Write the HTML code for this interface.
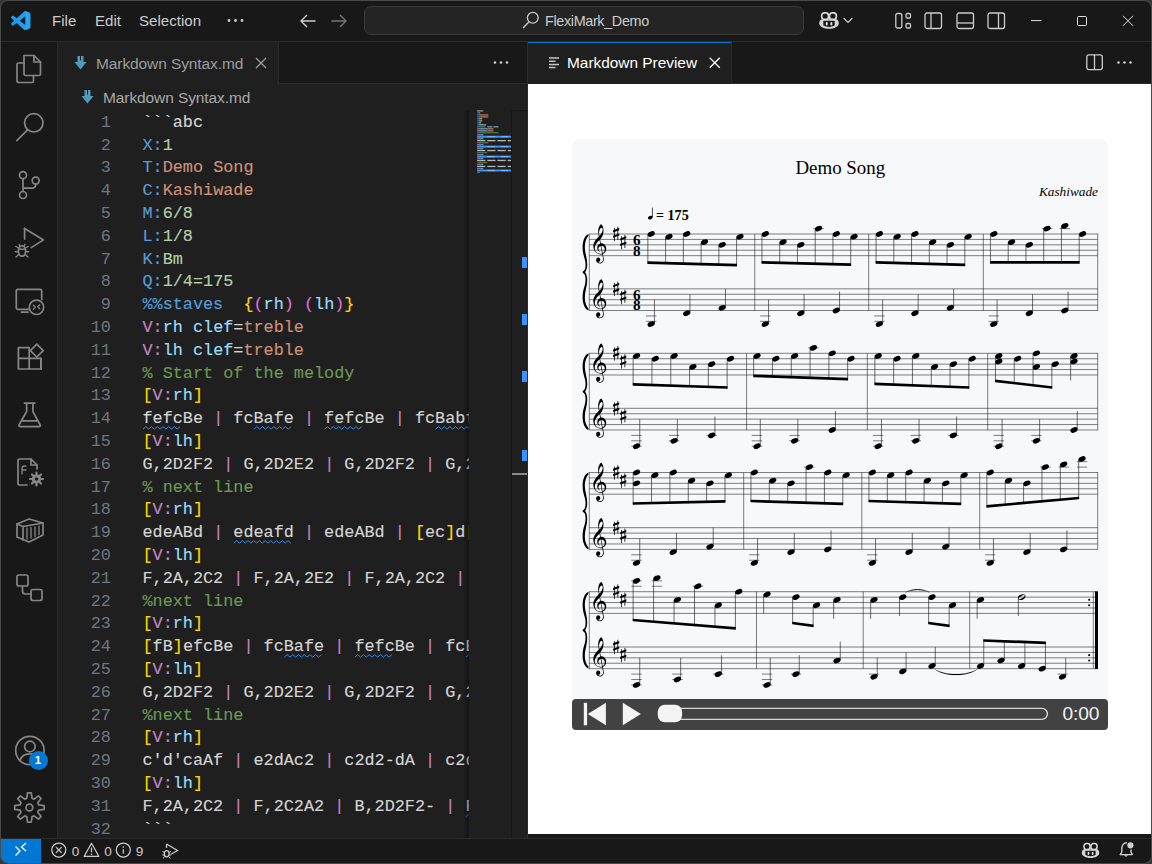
<!DOCTYPE html><html><head><meta charset="utf-8"><title>FlexiMark_Demo</title><style>
*{box-sizing:border-box;margin:0;padding:0}
html,body{width:1152px;height:864px;overflow:hidden;background:#2a2a2a}
body{font-family:"Liberation Sans",sans-serif;color:#ccc;position:relative}
.a{position:absolute}
.t{position:absolute;white-space:pre;line-height:20px;height:20px}
svg{position:absolute;overflow:visible}
#win{position:absolute;left:1px;top:0;width:1150px;height:863px;background:#181818;border-radius:8px;overflow:hidden}
.ln{position:absolute;left:0;width:109.5px;text-align:right;color:#6e7681;font-family:"Liberation Mono",monospace;font-size:16.82px;line-height:22.8px;height:22.8px;white-space:pre}
.cl{-webkit-text-stroke-width:.15px;position:absolute;left:141.8px;font-family:"Liberation Mono",monospace;font-size:16.82px;line-height:22.8px;height:22.8px;white-space:pre;color:#d4d4d4}
.b{color:#569cd6}.g{color:#b5cea8}.o{color:#ce9178}.y{color:#ffd700}.p{color:#da70d6}.k{color:#c586c0}.l{color:#9cdcfe}.c{color:#6a9955}
</style></head><body><div class="a" style="left:0;top:0;width:1152px;height:41px;background:#181818"></div><div class="a" style="left:0;top:41px;width:1152px;height:1px;background:#2b2b2b"></div><svg style="left:11px;top:11px" width="19.300" height="19.300" viewBox="0 0 100 100"><path d="M96.5 10.8L75.9.9c-2.4-1.1-5.200-.7-7.100 1.200L29.400 38 12.200 25c-1.600-1.200-3.800-1.100-5.300.2l-5.500 5c-1.800 1.700-1.800 4.500 0 6.200L16.300 50 1.400 63.600c-1.800 1.700-1.800 4.500 0 6.200l5.500 5c1.500 1.300 3.700 1.400 5.300.2l17.200-13 39.400 35.900c1.900 1.900 4.700 2.300 7.100 1.200l20.600-9.900c2.200-1 3.500-3.200 3.500-5.600V16.400c0-2.400-1.400-4.600-3.500-5.600zM75 72.700L45.100 50 75 27.300v45.400z" fill="#1f9cf0"/><path d="M75 27.300V.6c2 .3 20 9.300 21.500 10.200 2.100 1 3.500 3.200 3.500 5.600v67.200c0 2.400-1.300 4.600-3.500 5.600L75.900 99.100 75 72.700z" fill="#23a9f2" opacity=".9"/></svg><div class="t" style="left:52px;top:10.700px;font-size:15.100px;color:#ccc;letter-spacing:0px">File</div><div class="t" style="left:95px;top:10.700px;font-size:15.100px;color:#ccc;letter-spacing:0px">Edit</div><div class="t" style="left:139px;top:10.700px;font-size:15.100px;color:#ccc;letter-spacing:0px">Selection</div><svg style="left:227px;top:18px" width="18" height="6"><circle cx="2" cy="2.500" r="1.400" fill="#ccc"/><circle cx="8.500" cy="2.500" r="1.400" fill="#ccc"/><circle cx="15" cy="2.500" r="1.400" fill="#ccc"/></svg><svg style="left:299px;top:13px" width="18" height="16"><path d="M16.500 8H2M8 2L2 8l6 6" stroke="#ccc" stroke-width="1.400" fill="none"/></svg><svg style="left:330px;top:13px" width="18" height="16"><path d="M1.500 8H16M10 2l6 6-6 6" stroke="#777" stroke-width="1.400" fill="none"/></svg><div class="a" style="left:364px;top:6px;width:440px;height:29px;background:#242424;border:1px solid #3a3a3a;border-radius:7px"></div><svg style="left:522px;top:11px" width="18" height="18"><circle cx="10.800" cy="6.800" r="5.400" stroke="#ccc" stroke-width="1.300" fill="none"/><path d="M7 10.800L1 17" stroke="#ccc" stroke-width="1.400"/></svg><div class="t" style="left:545px;top:11px;font-size:14.4px;color:#ccc;letter-spacing:-0.35px">FlexiMark_Demo</div><svg style="left:819px;top:11px" width="34" height="19" viewBox="0 0 34 19"><path d="M2.500 8.200C.9 9.200 .2 10.600 .2 12.200C.2 15.300 4.800 17.800 10 17.800C15.200 17.800 19.800 15.300 19.800 12.200C19.800 10.600 19.100 9.200 17.500 8.200Z" fill="#d4d4d4"/><path d="M4.300 9.800H15.700V14.300C14 15.500 12 15.900 10 15.900C8 15.900 6 15.500 4.300 14.300Z" fill="#181818"/><rect x="6.800" y="11" width="1.900" height="3.500" rx=".9" fill="#e4e4e4"/><rect x="11.400" y="11" width="1.900" height="3.500" rx=".9" fill="#e4e4e4"/><rect x="2.700" y="1.800" width="6.800" height="6.600" rx="2.700" fill="#181818" stroke="#d8d8d8" stroke-width="1.700"/><rect x="10.500" y="1.800" width="6.800" height="6.600" rx="2.700" fill="#181818" stroke="#d8d8d8" stroke-width="1.700"/><path d="M24.600 7l4.400 4.400 4.400-4.400" stroke="#ccc" stroke-width="1.200" fill="none"/></svg><svg style="left:895px;top:12px" width="18" height="17"><rect x=".8" y="1.500" width="6" height="14.500" rx="1.500" stroke="#ccc" stroke-width="1.300" fill="none"/><rect x="11" y="1.500" width="4.500" height="4.500" rx="1.300" stroke="#ccc" stroke-width="1.300" fill="none"/><rect x="11" y="11.500" width="4.500" height="4.500" rx="1.300" stroke="#ccc" stroke-width="1.300" fill="none"/></svg><svg style="left:924px;top:12px" width="19" height="17"><rect x="1" y="1" width="16.500" height="15.500" rx="2" stroke="#ccc" stroke-width="1.300" fill="none"/><path d="M7 1V16.500" stroke="#ccc" stroke-width="1.300"/></svg><svg style="left:955.500px;top:12px" width="19" height="17"><rect x="1" y="1" width="16.500" height="15.500" rx="2" stroke="#ccc" stroke-width="1.300" fill="none"/><path d="M1 11H17.500" stroke="#ccc" stroke-width="1.300"/></svg><svg style="left:987px;top:12px" width="19" height="17"><rect x="1" y="1" width="16.500" height="15.500" rx="2" stroke="#ccc" stroke-width="1.300" fill="none"/><path d="M11.500 1V16.500" stroke="#ccc" stroke-width="1.300"/></svg><svg style="left:1030px;top:14px" width="110" height="14"><path d="M1 6.600H11.500" stroke="#ddd" stroke-width="1"/><rect x="47.500" y="2.500" width="9" height="9" rx="1" stroke="#ddd" stroke-width="1" fill="none"/><path d="M93 1.800L103 11.800M103 1.800L93 11.800" stroke="#ddd" stroke-width="1"/></svg><div class="a" style="left:0;top:42px;width:57px;height:796px;background:#181818"></div><div class="a" style="left:57px;top:42px;width:1px;height:796px;background:#2b2b2b"></div><svg style="left:14.5px;top:54px" width="30" height="30" viewBox="0 0 30 30" fill="none" stroke="#868686" stroke-width="1.700" stroke-linejoin="round" stroke-linecap="round"><path d="M9 1.500H19L25.500 8V20a1.500 1.500 0 0 1-1.500 1.500H10.500A1.500 1.500 0 0 1 9 20Z"/><path d="M19 1.500V8H25.500"/><path d="M9 9H3.500A1.500 1.500 0 0 0 2 10.500V27a1.500 1.500 0 0 0 1.500 1.500H17a1.500 1.500 0 0 0 1.500-1.500V21.500"/></svg><svg style="left:14.5px;top:112px" width="30" height="30" viewBox="0 0 30 30" fill="none" stroke="#868686" stroke-width="1.700" stroke-linejoin="round" stroke-linecap="round"><circle cx="18.800" cy="10.800" r="9.200"/><path d="M12.600 17.800L1.800 28.600"/></svg><svg style="left:14.5px;top:169px" width="30" height="30" viewBox="0 0 30 30" fill="none" stroke="#868686" stroke-width="1.700" stroke-linejoin="round" stroke-linecap="round"><circle cx="8" cy="6.200" r="3.500"/><circle cx="8" cy="26" r="3.500"/><circle cx="20.700" cy="11.600" r="3.500"/><path d="M8 9.700V22.500M20.700 15.100V15.700A3.500 3.500 0 0 1 17.200 19.200H8"/></svg><svg style="left:14.5px;top:227px" width="30" height="32" viewBox="0 0 30 32" fill="none" stroke="#868686" stroke-width="1.700" stroke-linejoin="round" stroke-linecap="round"><path d="M9.600 1.400L28.500 12.900L16.300 20.600"/><path d="M9.600 1.400V12"/><ellipse cx="7" cy="24" rx="3.600" ry="5.200"/><path d="M3.400 22.300H10.600M.8 19.500L3.600 21M13.200 19.500L10.400 21M.3 24.800H3.400M10.600 24.800H13.700M1 30L3.900 27.500M13 30L10.100 27.500M5 19.300L4.200 17.500M9 19.300L9.800 17.500" stroke-width="1.400"/></svg><svg style="left:14.5px;top:285px" width="30" height="32" viewBox="0 0 30 32" fill="none" stroke="#868686" stroke-width="1.700" stroke-linejoin="round" stroke-linecap="round"><path d="M14.500 24.300H2.800A1.500 1.500 0 0 1 1.300 22.800V5.900A1.500 1.500 0 0 1 2.800 4.400H25.200A1.500 1.500 0 0 1 26.700 5.900V14.500"/><path d="M6.500 27.200H13"/><circle cx="21.500" cy="22.300" r="7.200"/><path d="M18.300 20.300L20.300 22.300L18.300 24.300M24.700 19.800L22.700 21.800L24.700 23.800" stroke-width="1.300"/></svg><svg style="left:14.5px;top:342px" width="30" height="31" viewBox="0 0 30 31" fill="none" stroke="#868686" stroke-width="1.700" stroke-linejoin="round" stroke-linecap="round"><path d="M3.400 5.700H14.200V27H3.400ZM3.400 16.400H25.900V27H14.200"/><path d="M25.900 16.400V27"/><path d="M21.800 2.200L28.200 8.600L21.800 15L15.400 8.600Z"/></svg><svg style="left:14.5px;top:400px" width="30" height="30" viewBox="0 0 30 30" fill="none" stroke="#868686" stroke-width="1.700" stroke-linejoin="round" stroke-linecap="round"><path d="M9.500 3.200H19.900M11.600 3.200V11.700L4 25a1.100 1.100 0 0 0 1 1.600H24.200a1.100 1.100 0 0 0 1-1.600L17.900 11.700V3.200"/><path d="M7 20.800H22.200"/></svg><svg style="left:14.5px;top:457px" width="30" height="31" viewBox="0 0 30 31" fill="none" stroke="#868686" stroke-width="1.700" stroke-linejoin="round" stroke-linecap="round"><path d="M12 28H4.500A1.500 1.500 0 0 1 3 26.500V3.500A1.500 1.500 0 0 1 4.500 2H16L22 8V12"/><path d="M16 2V8H22"/><path d="M7 17V11.500C7 10 8 9 9.500 9H11M11 13H7" stroke-width="1.300"/><circle cx="21.500" cy="22" r="3.200" stroke-width="3"/><path d="M21.500 15.500V17M21.500 27V28.500M15 22H16.500M26.500 22H28M17 17.500L18 18.500M25 25.500L26 26.500M17 26.500L18 25.500M25 18.500L26 17.500" stroke-width="2.200"/></svg><svg style="left:14.5px;top:515px" width="30" height="31" viewBox="0 0 30 31" fill="none" stroke="#868686" stroke-width="1.700" stroke-linejoin="round" stroke-linecap="round"><path d="M2 9L14 4L28 8V20L14 27L2 22Z"/><path d="M2 9L8 11.500V25M8 11.500L28 8"/><path d="M12 13V24M16 12.500V23M20 12V21.500M24 11V19.500" stroke-width="1.300"/></svg><svg style="left:14.5px;top:573px" width="30" height="31" viewBox="0 0 30 31" fill="none" stroke="#868686" stroke-width="1.700" stroke-linejoin="round" stroke-linecap="round"><rect x="2" y="2" width="11" height="11" rx="2"/><rect x="16" y="16.500" width="11" height="11" rx="2"/><path d="M7.500 13V18a3 3 0 0 0 3 3H16"/></svg><svg style="left:14.5px;top:735px" width="30" height="32" viewBox="0 0 30 32" fill="none" stroke="#868686" stroke-width="1.700" stroke-linejoin="round" stroke-linecap="round"><circle cx="14.900" cy="15.500" r="14.200"/><circle cx="14.900" cy="11.500" r="5.300"/><path d="M5 25.500C6.500 20 10.500 18.800 14.900 18.800s8.400 1.200 9.900 6.700"/></svg><div class="a" style="left:28.500px;top:750.500px;width:19px;height:19px;border-radius:10px;background:#0078d4"></div><div class="t" style="left:28.500px;top:750.500px;width:19px;text-align:center;font-size:11.500px;font-weight:bold;color:#fff;line-height:19px;height:19px">1</div><svg style="left:14.5px;top:790px" width="30" height="34" viewBox="0 0 30 34" fill="none" stroke="#868686" stroke-width="1.700" stroke-linejoin="round" stroke-linecap="round"><circle cx="14.400" cy="17.500" r="3.400"/><path d="M11.8 8.2L12.5 2.8L16.3 2.8L17.0 8.2L19.1 9.1L23.4 5.8L26.1 8.5L22.8 12.8L23.7 14.9L29.1 15.6L29.1 19.4L23.7 20.1L22.8 22.2L26.1 26.5L23.4 29.2L19.1 25.9L17.0 26.8L16.3 32.2L12.5 32.2L11.8 26.8L9.7 25.9L5.4 29.2L2.7 26.5L6.0 22.2L5.1 20.1L-0.3 19.4L-0.3 15.6L5.1 14.9L6.0 12.8L2.7 8.5L5.4 5.8L9.7 9.1Z"/></svg><div class="a" style="left:58px;top:42px;width:470px;height:42px;background:#181818"></div><div class="a" style="left:58px;top:83px;width:470px;height:1px;background:#2b2b2b"></div><div class="a" style="left:58px;top:42px;width:221px;height:42px;background:#1f1f1f;border-right:1px solid #2b2b2b"></div><div class="a" style="left:58px;top:84px;width:470px;height:754px;background:#1f1f1f"></div><svg style="left:74px;top:56px" width="13" height="14" viewBox="0 0 13 14"><path d="M3.500 0H9.500V6H12.500L6.500 13.500L.5 6H3.500Z" fill="#519aba"/><path d="M6.500 0V4.500" stroke="#1f1f1f" stroke-width="1"/></svg><div class="t" style="left:96px;top:54px;font-size:15.500px;color:#9d9d9d;letter-spacing:-0.100px">Markdown Syntax.md</div><svg style="left:255px;top:57px" width="12" height="12"><path d="M1 1L11 11M11 1L1 11" stroke="#9d9d9d" stroke-width="1.300"/></svg><svg style="left:493px;top:60px" width="16" height="5"><circle cx="2" cy="2.500" r="1.300" fill="#ccc"/><circle cx="8" cy="2.500" r="1.300" fill="#ccc"/><circle cx="14" cy="2.500" r="1.300" fill="#ccc"/></svg><svg style="left:81px;top:90px" width="13" height="14" viewBox="0 0 13 14"><path d="M3.500 0H9.500V6H12.500L6.500 13.500L.5 6H3.500Z" fill="#519aba"/><path d="M6.500 0V4.500" stroke="#1f1f1f" stroke-width="1"/></svg><div class="t" style="left:103px;top:88px;font-size:15.500px;color:#a9a9a9;letter-spacing:-0.100px">Markdown Syntax.md</div><div class="a" style="left:58px;top:111.800px;width:411px;height:726px;overflow:hidden"><div class="ln" style="top:0.0px;left:0;width:52.900px">1</div><div class="cl" style="top:0.0px;left:84.500px">```abc</div><div class="ln" style="top:22.8px;left:0;width:52.900px">2</div><div class="cl" style="top:22.8px;left:84.500px"><span class="b">X:</span><span class="g">1</span></div><div class="ln" style="top:45.6px;left:0;width:52.900px">3</div><div class="cl" style="top:45.6px;left:84.500px"><span class="b">T:</span><span class="o">Demo Song</span></div><div class="ln" style="top:68.4px;left:0;width:52.900px">4</div><div class="cl" style="top:68.4px;left:84.500px"><span class="b">C:</span><span class="o">Kashiwade</span></div><div class="ln" style="top:91.2px;left:0;width:52.900px">5</div><div class="cl" style="top:91.2px;left:84.500px"><span class="b">M:</span><span class="g">6/8</span></div><div class="ln" style="top:114.0px;left:0;width:52.900px">6</div><div class="cl" style="top:114.0px;left:84.500px"><span class="b">L:</span><span class="g">1/8</span></div><div class="ln" style="top:136.8px;left:0;width:52.900px">7</div><div class="cl" style="top:136.8px;left:84.500px"><span class="b">K:</span><span class="g">Bm</span></div><div class="ln" style="top:159.6px;left:0;width:52.900px">8</div><div class="cl" style="top:159.6px;left:84.500px"><span class="b">Q:</span><span class="g">1/4=175</span></div><div class="ln" style="top:182.4px;left:0;width:52.900px">9</div><div class="cl" style="top:182.4px;left:84.500px"><span class="b">%%staves</span>  <span class="y">{</span><span class="p">(</span><span class="l">rh</span><span class="p">)</span> <span class="p">(</span><span class="l">lh</span><span class="p">)</span><span class="y">}</span></div><div class="ln" style="top:205.2px;left:0;width:52.900px">10</div><div class="cl" style="top:205.2px;left:84.500px"><span class="k">V:</span><span class="l">rh clef</span>=<span class="o">treble</span></div><div class="ln" style="top:228.0px;left:0;width:52.900px">11</div><div class="cl" style="top:228.0px;left:84.500px"><span class="k">V:</span><span class="l">lh clef</span>=<span class="o">treble</span></div><div class="ln" style="top:250.8px;left:0;width:52.900px">12</div><div class="cl" style="top:250.8px;left:84.500px"><span class="c">% Start of the melody</span></div><div class="ln" style="top:273.6px;left:0;width:52.900px">13</div><div class="cl" style="top:273.6px;left:84.500px"><span class="y">[</span><span class="k">V:</span><span class="l">rh</span><span class="y">]</span></div><div class="ln" style="top:296.4px;left:0;width:52.900px">14</div><div class="cl" style="top:296.4px;left:84.500px">fefcBe <span class="k">|</span> fcBafe <span class="k">|</span> fefcBe <span class="k">|</span> fcBabf</div><div class="ln" style="top:319.2px;left:0;width:52.900px">15</div><div class="cl" style="top:319.2px;left:84.500px"><span class="y">[</span><span class="k">V:</span><span class="l">lh</span><span class="y">]</span></div><div class="ln" style="top:342.0px;left:0;width:52.900px">16</div><div class="cl" style="top:342.0px;left:84.500px">G,2D2F2 <span class="k">|</span> G,2D2E2 <span class="k">|</span> G,2D2F2 <span class="k">|</span> G,2D2E2</div><div class="ln" style="top:364.8px;left:0;width:52.900px">17</div><div class="cl" style="top:364.8px;left:84.500px"><span class="c">% next line</span></div><div class="ln" style="top:387.6px;left:0;width:52.900px">18</div><div class="cl" style="top:387.6px;left:84.500px"><span class="y">[</span><span class="k">V:</span><span class="l">rh</span><span class="y">]</span></div><div class="ln" style="top:410.4px;left:0;width:52.900px">19</div><div class="cl" style="top:410.4px;left:84.500px">edeABd <span class="k">|</span> edeafd <span class="k">|</span> edeABd <span class="k">|</span> <span class="y">[</span>ec<span class="y">]</span>d<span class="y">[</span>fA<span class="y">]</span>B<span class="y">[</span>ec<span class="y">]</span>2</div><div class="ln" style="top:433.2px;left:0;width:52.900px">20</div><div class="cl" style="top:433.2px;left:84.500px"><span class="y">[</span><span class="k">V:</span><span class="l">lh</span><span class="y">]</span></div><div class="ln" style="top:456.0px;left:0;width:52.900px">21</div><div class="cl" style="top:456.0px;left:84.500px">F,2A,2C2 <span class="k">|</span> F,2A,2E2 <span class="k">|</span> F,2A,2C2 <span class="k">|</span> F,2A,2E2</div><div class="ln" style="top:478.8px;left:0;width:52.900px">22</div><div class="cl" style="top:478.8px;left:84.500px"><span class="c">%next line</span></div><div class="ln" style="top:501.6px;left:0;width:52.900px">23</div><div class="cl" style="top:501.6px;left:84.500px"><span class="y">[</span><span class="k">V:</span><span class="l">rh</span><span class="y">]</span></div><div class="ln" style="top:524.4px;left:0;width:52.900px">24</div><div class="cl" style="top:524.4px;left:84.500px"><span class="y">[</span>fB<span class="y">]</span>efcBe <span class="k">|</span> fcBafe <span class="k">|</span> fefcBe <span class="k">|</span> fcBabd'</div><div class="ln" style="top:547.2px;left:0;width:52.900px">25</div><div class="cl" style="top:547.2px;left:84.500px"><span class="y">[</span><span class="k">V:</span><span class="l">lh</span><span class="y">]</span></div><div class="ln" style="top:570.0px;left:0;width:52.900px">26</div><div class="cl" style="top:570.0px;left:84.500px">G,2D2F2 <span class="k">|</span> G,2D2E2 <span class="k">|</span> G,2D2F2 <span class="k">|</span> G,2D2E2</div><div class="ln" style="top:592.8px;left:0;width:52.900px">27</div><div class="cl" style="top:592.8px;left:84.500px"><span class="c">%next line</span></div><div class="ln" style="top:615.6px;left:0;width:52.900px">28</div><div class="cl" style="top:615.6px;left:84.500px"><span class="y">[</span><span class="k">V:</span><span class="l">rh</span><span class="y">]</span></div><div class="ln" style="top:638.4px;left:0;width:52.900px">29</div><div class="cl" style="top:638.4px;left:84.500px">c'd'caAf <span class="k">|</span> e2dAc2 <span class="k">|</span> c2d2-dA <span class="k">|</span> c2d4 :|</div><div class="ln" style="top:661.2px;left:0;width:52.900px">30</div><div class="cl" style="top:661.2px;left:84.500px"><span class="y">[</span><span class="k">V:</span><span class="l">lh</span><span class="y">]</span></div><div class="ln" style="top:684.0px;left:0;width:52.900px">31</div><div class="cl" style="top:684.0px;left:84.500px">F,2A,2C2 <span class="k">|</span> F,2C2A2 <span class="k">|</span> B,2D2F2- <span class="k">|</span> FAFEB,2 :|</div><div class="ln" style="top:706.8px;left:0;width:52.900px">32</div><div class="cl" style="top:706.8px;left:84.500px">```</div><svg style="left:0;top:0" width="1" height="1"><path d="M85.0 317.1L87.8 314.7L90.7 317.1L93.5 314.7L96.4 317.1L99.2 314.7L102.1 317.1L105.0 314.7L107.8 317.1L110.7 314.7L113.5 317.1L116.4 314.7L119.2 317.1L122.1 314.7" stroke="#3794ff" stroke-width="1" stroke-opacity=".9" fill="none"/></svg><svg style="left:0;top:0" width="1" height="1"><path d="M196.0 317.1L198.8 314.7L201.7 317.1L204.5 314.7L207.4 317.1L210.2 314.7L213.1 317.1L215.9 314.7L218.8 317.1L221.6 314.7L224.5 317.1L227.3 314.7L230.2 317.1L233.0 314.7" stroke="#3794ff" stroke-width="1" stroke-opacity=".9" fill="none"/></svg><svg style="left:0;top:0" width="1" height="1"><path d="M266.6 317.1L269.5 314.7L272.3 317.1L275.2 314.7L278.0 317.1L280.9 314.7L283.7 317.1L286.6 314.7L289.4 317.1L292.3 314.7L295.1 317.1L298.0 314.7L300.8 317.1L303.7 314.7" stroke="#3794ff" stroke-width="1" stroke-opacity=".9" fill="none"/></svg><svg style="left:0;top:0" width="1" height="1"><path d="M377.6 317.1L380.5 314.7L383.3 317.1L386.2 314.7L389.0 317.1L391.9 314.7L394.7 317.1L397.6 314.7L400.4 317.1L403.3 314.7L406.1 317.1L409.0 314.7L411.8 317.1L414.7 314.7" stroke="#3794ff" stroke-width="1" stroke-opacity=".9" fill="none"/></svg><svg style="left:0;top:0" width="1" height="1"><path d="M175.8 431.1L178.7 428.7L181.5 431.1L184.4 428.7L187.2 431.1L190.1 428.7L192.9 431.1L195.8 428.7L198.6 431.1L201.5 428.7L204.3 431.1L207.2 428.7L210.0 431.1L212.9 428.7L215.7 431.1L218.6 428.7L221.4 431.1L224.3 428.7L227.1 431.1L230.0 428.7L232.8 431.1" stroke="#3794ff" stroke-width="1" stroke-opacity=".9" fill="none"/></svg><svg style="left:0;top:0" width="1" height="1"><path d="M226.3 545.1L229.1 542.7L232.0 545.1L234.8 542.7L237.7 545.1L240.5 542.7L243.4 545.1L246.2 542.7L249.1 545.1L251.9 542.7L254.8 545.1L257.6 542.7L260.5 545.1L263.3 542.7" stroke="#3794ff" stroke-width="1" stroke-opacity=".9" fill="none"/></svg><svg style="left:0;top:0" width="1" height="1"><path d="M296.9 545.1L299.7 542.7L302.6 545.1L305.4 542.7L308.3 545.1L311.1 542.7L314.0 545.1L316.8 542.7L319.7 545.1L322.5 542.7L325.4 545.1L328.2 542.7L331.1 545.1L333.9 542.7" stroke="#3794ff" stroke-width="1" stroke-opacity=".9" fill="none"/></svg><svg style="left:0;top:0" width="1" height="1"><path d="M407.9 545.1L410.7 542.7L413.6 545.1L416.4 542.7L419.3 545.1L422.1 542.7L425.0 545.1L427.8 542.7L430.7 545.1L433.5 542.7L436.4 545.1L439.2 542.7L442.1 545.1L444.9 542.7" stroke="#3794ff" stroke-width="1" stroke-opacity=".9" fill="none"/></svg><svg style="left:0;top:0" width="1" height="1"><path d="M407.9 704.7L410.7 702.3L413.6 704.7L416.4 702.3L419.3 704.7L422.1 702.3L425.0 704.7L427.8 702.3L430.7 704.7L433.5 702.3L436.4 704.7L439.2 702.3L442.1 704.7L444.9 702.3L447.8 704.7L450.6 702.3L453.5 704.7L456.3 702.3L459.2 704.7L462.0 702.3L464.9 704.7" stroke="#3794ff" stroke-width="1" stroke-opacity=".9" fill="none"/></svg></div><div class="a" style="left:463px;top:110px;width:6px;height:728px;background:linear-gradient(to right,rgba(0,0,0,0),rgba(0,0,0,.4))"></div><div class="a" style="left:469px;top:110px;width:43px;height:728px;background:#1f1f1f"></div><svg style="left:0;top:0" width="1" height="1"><rect x="477.1" y="110.2" width="6.1" height="1.400" fill="#888"/><rect x="477.1" y="112.2" width="2.0" height="1.400" fill="#3d6f99"/><rect x="479.1" y="112.2" width="1.0" height="1.400" fill="#8a9c80"/><rect x="477.1" y="114.2" width="2.0" height="1.400" fill="#3d6f99"/><rect x="479.1" y="114.2" width="9.2" height="1.400" fill="#a8705c"/><rect x="477.1" y="116.2" width="2.0" height="1.400" fill="#3d6f99"/><rect x="479.1" y="116.2" width="9.2" height="1.400" fill="#a8705c"/><rect x="477.1" y="118.1" width="2.0" height="1.400" fill="#3d6f99"/><rect x="479.1" y="118.1" width="3.1" height="1.400" fill="#8a9c80"/><rect x="477.1" y="120.1" width="2.0" height="1.400" fill="#3d6f99"/><rect x="479.1" y="120.1" width="3.1" height="1.400" fill="#8a9c80"/><rect x="477.1" y="122.1" width="2.0" height="1.400" fill="#3d6f99"/><rect x="479.1" y="122.1" width="2.0" height="1.400" fill="#8a9c80"/><rect x="477.1" y="124.1" width="2.0" height="1.400" fill="#3d6f99"/><rect x="479.1" y="124.1" width="7.1" height="1.400" fill="#8a9c80"/><rect x="477.1" y="126.1" width="8.2" height="1.400" fill="#3d6f99"/><rect x="487.3" y="126.1" width="5.1" height="1.400" fill="#6f8fa6"/><rect x="493.4" y="126.1" width="5.1" height="1.400" fill="#6f8fa6"/><rect x="477.1" y="128.1" width="2.0" height="1.400" fill="#96679a"/><rect x="479.1" y="128.1" width="8.2" height="1.400" fill="#6f93aa"/><rect x="487.3" y="128.1" width="6.1" height="1.400" fill="#a8705c"/><rect x="477.1" y="130.1" width="2.0" height="1.400" fill="#96679a"/><rect x="479.1" y="130.1" width="8.2" height="1.400" fill="#6f93aa"/><rect x="487.3" y="130.1" width="6.1" height="1.400" fill="#a8705c"/><rect x="477.1" y="132.0" width="21.4" height="1.400" fill="#4f7341"/><rect x="477.1" y="134.0" width="3.1" height="1.400" fill="#96679a"/><rect x="480.2" y="134.0" width="3.1" height="1.400" fill="#6f93aa"/><rect x="477.1" y="135.7" width="34" height="2" fill="#3794ff"/><rect x="487.1" y="136.1" width="8" height="1.200" fill="#9cc8f5" opacity=".6"/><rect x="501.1" y="136.1" width="7" height="1.200" fill="#9cc8f5" opacity=".6"/><rect x="477.1" y="138.0" width="3.1" height="1.400" fill="#96679a"/><rect x="480.2" y="138.0" width="3.1" height="1.400" fill="#6f93aa"/><rect x="477.1" y="140.0" width="8.2" height="1.300" fill="#d2d2d2" opacity=".85"/><rect x="487.3" y="140.0" width="8.2" height="1.300" fill="#d2d2d2" opacity=".85"/><rect x="497.5" y="140.0" width="8.2" height="1.300" fill="#d2d2d2" opacity=".85"/><rect x="507.7" y="140.0" width="3.4" height="1.300" fill="#d2d2d2" opacity=".85"/><rect x="477.1" y="142.0" width="11.2" height="1.400" fill="#4f7341"/><rect x="477.1" y="143.9" width="3.1" height="1.400" fill="#96679a"/><rect x="480.2" y="143.9" width="3.1" height="1.400" fill="#6f93aa"/><rect x="477.1" y="145.6" width="34" height="2" fill="#3794ff"/><rect x="487.1" y="146.0" width="8" height="1.200" fill="#9cc8f5" opacity=".6"/><rect x="501.1" y="146.0" width="7" height="1.200" fill="#9cc8f5" opacity=".6"/><rect x="477.1" y="147.9" width="3.1" height="1.400" fill="#96679a"/><rect x="480.2" y="147.9" width="3.1" height="1.400" fill="#6f93aa"/><rect x="477.1" y="149.9" width="8.2" height="1.300" fill="#d2d2d2" opacity=".85"/><rect x="487.3" y="149.9" width="8.2" height="1.300" fill="#d2d2d2" opacity=".85"/><rect x="497.5" y="149.9" width="8.2" height="1.300" fill="#d2d2d2" opacity=".85"/><rect x="507.7" y="149.9" width="3.4" height="1.300" fill="#d2d2d2" opacity=".85"/><rect x="477.1" y="151.9" width="10.2" height="1.400" fill="#4f7341"/><rect x="477.1" y="153.9" width="3.1" height="1.400" fill="#96679a"/><rect x="480.2" y="153.9" width="3.1" height="1.400" fill="#6f93aa"/><rect x="477.1" y="155.6" width="34" height="2" fill="#3794ff"/><rect x="487.1" y="156.0" width="8" height="1.200" fill="#9cc8f5" opacity=".6"/><rect x="501.1" y="156.0" width="7" height="1.200" fill="#9cc8f5" opacity=".6"/><rect x="477.1" y="157.8" width="3.1" height="1.400" fill="#96679a"/><rect x="480.2" y="157.8" width="3.1" height="1.400" fill="#6f93aa"/><rect x="477.1" y="159.8" width="8.2" height="1.300" fill="#d2d2d2" opacity=".85"/><rect x="487.3" y="159.8" width="8.2" height="1.300" fill="#d2d2d2" opacity=".85"/><rect x="497.5" y="159.8" width="8.2" height="1.300" fill="#d2d2d2" opacity=".85"/><rect x="507.7" y="159.8" width="3.4" height="1.300" fill="#d2d2d2" opacity=".85"/><rect x="477.1" y="161.8" width="10.2" height="1.400" fill="#4f7341"/><rect x="477.1" y="163.8" width="3.1" height="1.400" fill="#96679a"/><rect x="480.2" y="163.8" width="3.1" height="1.400" fill="#6f93aa"/><rect x="477.1" y="165.8" width="8.2" height="1.300" fill="#d2d2d2" opacity=".85"/><rect x="487.3" y="165.8" width="8.2" height="1.300" fill="#d2d2d2" opacity=".85"/><rect x="497.5" y="165.8" width="8.2" height="1.300" fill="#d2d2d2" opacity=".85"/><rect x="507.7" y="165.8" width="3.4" height="1.300" fill="#d2d2d2" opacity=".85"/><rect x="477.1" y="167.8" width="3.1" height="1.400" fill="#96679a"/><rect x="480.2" y="167.8" width="3.1" height="1.400" fill="#6f93aa"/><rect x="477.1" y="169.5" width="34" height="2" fill="#3794ff"/><rect x="487.1" y="169.9" width="8" height="1.200" fill="#9cc8f5" opacity=".6"/><rect x="501.1" y="169.9" width="7" height="1.200" fill="#9cc8f5" opacity=".6"/><rect x="477.1" y="171.7" width="3.1" height="1.400" fill="#666"/></svg><div class="a" style="left:511px;top:110px;width:1px;height:728px;background:#171717"></div><div class="a" style="left:511px;top:110px;width:16px;height:1px;background:#171717"></div><div class="a" style="left:521.500px;top:257px;width:6px;height:11px;background:#3794ff"></div><div class="a" style="left:521.500px;top:314px;width:6px;height:11px;background:#3794ff"></div><div class="a" style="left:521.500px;top:371px;width:6px;height:11px;background:#3794ff"></div><div class="a" style="left:521.500px;top:450px;width:6px;height:11px;background:#3794ff"></div><div class="a" style="left:512px;top:473px;width:15px;height:2px;background:#8a8a8a"></div><div class="a" style="left:527px;top:42px;width:1px;height:796px;background:#2b2b2b"></div><div class="a" style="left:528px;top:42px;width:624px;height:42px;background:#181818"></div><div class="a" style="left:528px;top:83px;width:624px;height:1px;background:#2b2b2b"></div><div class="a" style="left:528px;top:42px;width:204px;height:42px;background:#1f1f1f;border-right:1px solid #2b2b2b;border-top:1px solid #0078d4"></div><svg style="left:549px;top:57px" width="11" height="12"><path d="M0 1H10M0 4.200H6.500M0 7.400H10M0 10.600H6.500" stroke="#c5c5c5" stroke-width="1.500"/></svg><div class="t" style="left:567px;top:53px;font-size:15.400px;color:#fff">Markdown Preview</div><svg style="left:709px;top:57px" width="12" height="12"><path d="M.7.7L10.800 10.800M10.800.7L.7 10.800" stroke="#fff" stroke-width="1.300"/></svg><svg style="left:1085.500px;top:53.500px" width="18" height="17"><rect x=".8" y=".8" width="15.500" height="14.800" rx="2" stroke="#ccc" stroke-width="1.300" fill="none"/><path d="M8.500 1V15.500" stroke="#ccc" stroke-width="1.300"/></svg><svg style="left:1117px;top:60px" width="16" height="5"><circle cx="1.500" cy="2.500" r="1.300" fill="#ccc"/><circle cx="7.500" cy="2.500" r="1.300" fill="#ccc"/><circle cx="13.500" cy="2.500" r="1.300" fill="#ccc"/></svg><div class="a" style="left:528px;top:84px;width:623px;height:750px;background:#fff"></div><div class="a" style="left:528px;top:834px;width:624px;height:4px;background:#181818"></div><div class="a" style="left:572px;top:139px;width:536px;height:563px;background:#f6f8fa;border-radius:8px"></div><div class="a" style="left:572px;top:699px;width:536px;height:30.700px;background:#424242;border-radius:4px"></div><svg style="left:0;top:0" width="1" height="1"><rect x="583.800" y="702.800" width="3.300" height="22.500" fill="#f4f4f4"/><path d="M587.800 714L605.900 702.800V725.200Z" fill="#f4f4f4"/><path d="M622.800 702.800L640.900 714L622.800 725.200Z" fill="#f4f4f4"/><rect x="658.600" y="708.400" width="388.800" height="11" rx="5.500" fill="none" stroke="#d6d6d6" stroke-width="1.400"/><rect x="657.800" y="704.800" width="24.300" height="17.500" rx="7" fill="#f4f4f4"/></svg><div class="t" style="left:1062.500px;top:703px;font-size:19.200px;color:#f4f4f4;letter-spacing:-0.150px;line-height:22px;height:22px">0:00</div><svg width="1152" height="864" viewBox="0 0 1152 864" style="left:0;top:0;position:absolute"><path d="M589.3 234H1097.7M589.3 239.42H1097.7M589.3 244.84H1097.7M589.3 250.26H1097.7M589.3 255.68H1097.7" stroke="#000" stroke-width="0.5" fill="none"/><path d="M589.3 288.85H1097.7M589.3 294.27H1097.7M589.3 299.69H1097.7M589.3 305.11H1097.7M589.3 310.53H1097.7" stroke="#000" stroke-width="0.5" fill="none"/><path d="M589.3 233.65V310.88" stroke="#000" stroke-width="0.5" fill="none"/><path d="M1097.7 233.65V310.88" stroke="#000" stroke-width="0.5" fill="none"/><path d="M754.75 234V310.53" stroke="#000" stroke-width="0.5" fill="none"/><path d="M868.7 234V310.53" stroke="#000" stroke-width="0.5" fill="none"/><path d="M983.3 234V310.53" stroke="#000" stroke-width="0.5" fill="none"/><path transform="translate(580.77 310.53) scale(0.03665 0.07653)" d="M53 -509Q84 -511 107 -533Q130 -555 130 -595Q130 -615 125 -634Q120 -653 108 -671Q85 -706 68 -743Q50 -780 50 -835Q50 -879 72 -913Q93 -947 129 -970Q165 -992 207 -1000L211 -976Q167 -954 139 -917Q111 -880 111 -833Q111 -807 120 -778Q128 -750 144 -718Q176 -654 176 -602Q176 -577 168 -558Q163 -545 152 -532Q141 -518 131 -509Q121 -500 117 -500Q138 -490 157 -462Q176 -433 176 -398Q176 -345 144 -283Q111 -220 111 -167Q111 -120 139 -84Q167 -47 211 -24L207 0Q165 -8 129 -30Q93 -53 72 -88Q50 -122 50 -165Q50 -210 60 -240Q71 -271 90 -298Q105 -320 118 -347Q130 -374 130 -405Q130 -445 108 -466Q85 -487 53 -491Z" fill="#000"/><path transform="translate(592.24 254.49) scale(0.02111 0.02263)" d="M314 -801Q300 -854 291 -906Q282 -958 282 -1012Q282 -1059 288 -1100Q295 -1142 307 -1177Q320 -1217 341 -1252Q362 -1288 386 -1311Q409 -1334 427 -1334Q451 -1334 493 -1249Q514 -1206 524 -1156Q534 -1106 534 -1049Q534 -978 515 -908Q496 -837 460 -775Q423 -713 372 -666L407 -498Q422 -500 432 -501Q442 -502 447 -502Q508 -502 556 -468Q604 -433 632 -377Q661 -321 661 -254Q661 -177 622 -116Q582 -54 503 -25Q508 -8 532 117Q538 147 541 164Q544 182 545 195Q546 208 546 225Q546 275 522 314Q497 354 456 376Q414 398 363 398Q311 398 271 378Q231 359 208 324Q185 290 185 245Q185 197 212 165Q238 133 287 133Q329 133 356 164Q382 194 382 236Q382 272 357 299Q332 326 292 326H282Q308 365 364 365Q433 365 472 320Q511 275 511 205Q511 188 507 160Q503 131 493 91Q483 51 478 25Q472 -1 470 -12Q436 -2 390 -2Q304 -2 222 -52Q142 -102 96 -184Q50 -266 50 -361Q50 -451 91 -530Q132 -609 192 -675Q253 -741 314 -801ZM341 -826Q364 -838 390 -870Q416 -903 440 -945Q464 -987 479 -1030Q494 -1072 494 -1106Q494 -1142 483 -1163Q472 -1184 445 -1184Q421 -1184 398 -1162Q376 -1140 358 -1104Q341 -1067 331 -1022Q321 -977 321 -930Q321 -898 328 -872Q334 -846 341 -826ZM398 -379Q371 -373 347 -354Q323 -334 308 -306Q294 -279 294 -248Q294 -223 307 -196Q320 -170 339 -154Q352 -142 365 -136Q380 -129 380 -123Q380 -120 370 -117Q332 -126 302 -151Q271 -176 254 -212Q236 -247 236 -287Q236 -330 254 -370Q271 -410 302 -442Q334 -474 374 -490L345 -641Q229 -547 174 -456Q120 -366 120 -277Q120 -212 154 -156Q188 -100 247 -66Q306 -31 380 -31Q400 -31 420 -35Q441 -39 464 -45ZM495 -55Q593 -97 593 -227Q593 -270 571 -306Q549 -341 512 -362Q475 -383 429 -383Z" fill="#000"/><path transform="translate(592.24 309.34) scale(0.02111 0.02263)" d="M314 -801Q300 -854 291 -906Q282 -958 282 -1012Q282 -1059 288 -1100Q295 -1142 307 -1177Q320 -1217 341 -1252Q362 -1288 386 -1311Q409 -1334 427 -1334Q451 -1334 493 -1249Q514 -1206 524 -1156Q534 -1106 534 -1049Q534 -978 515 -908Q496 -837 460 -775Q423 -713 372 -666L407 -498Q422 -500 432 -501Q442 -502 447 -502Q508 -502 556 -468Q604 -433 632 -377Q661 -321 661 -254Q661 -177 622 -116Q582 -54 503 -25Q508 -8 532 117Q538 147 541 164Q544 182 545 195Q546 208 546 225Q546 275 522 314Q497 354 456 376Q414 398 363 398Q311 398 271 378Q231 359 208 324Q185 290 185 245Q185 197 212 165Q238 133 287 133Q329 133 356 164Q382 194 382 236Q382 272 357 299Q332 326 292 326H282Q308 365 364 365Q433 365 472 320Q511 275 511 205Q511 188 507 160Q503 131 493 91Q483 51 478 25Q472 -1 470 -12Q436 -2 390 -2Q304 -2 222 -52Q142 -102 96 -184Q50 -266 50 -361Q50 -451 91 -530Q132 -609 192 -675Q253 -741 314 -801ZM341 -826Q364 -838 390 -870Q416 -903 440 -945Q464 -987 479 -1030Q494 -1072 494 -1106Q494 -1142 483 -1163Q472 -1184 445 -1184Q421 -1184 398 -1162Q376 -1140 358 -1104Q341 -1067 331 -1022Q321 -977 321 -930Q321 -898 328 -872Q334 -846 341 -826ZM398 -379Q371 -373 347 -354Q323 -334 308 -306Q294 -279 294 -248Q294 -223 307 -196Q320 -170 339 -154Q352 -142 365 -136Q380 -129 380 -123Q380 -120 370 -117Q332 -126 302 -151Q271 -176 254 -212Q236 -247 236 -287Q236 -330 254 -370Q271 -410 302 -442Q334 -474 374 -490L345 -641Q229 -547 174 -456Q120 -366 120 -277Q120 -212 154 -156Q188 -100 247 -66Q306 -31 380 -31Q400 -31 420 -35Q441 -39 464 -45ZM495 -55Q593 -97 593 -227Q593 -270 571 -306Q549 -341 512 -362Q475 -383 429 -383Z" fill="#000"/><g transform="translate(616.2 234)" fill="#000"><path d="M-1.75 -5.9V7.2M1.55 -7.2V5.9" stroke="#000" stroke-width="0.8"/><path d="M-3.1 -1.1L3.0 -3.3V-1.2L-3.1 1.0ZM-3.1 4.3L3.0 2.1V4.2L-3.1 6.4Z" transform="translate(0 -2.6)"/></g><g transform="translate(623.3 242.13)" fill="#000"><path d="M-1.75 -5.9V7.2M1.55 -7.2V5.9" stroke="#000" stroke-width="0.8"/><path d="M-3.1 -1.1L3.0 -3.3V-1.2L-3.1 1.0ZM-3.1 4.3L3.0 2.1V4.2L-3.1 6.4Z" transform="translate(0 -2.6)"/></g><g transform="translate(616.2 288.85)" fill="#000"><path d="M-1.75 -5.9V7.2M1.55 -7.2V5.9" stroke="#000" stroke-width="0.8"/><path d="M-3.1 -1.1L3.0 -3.3V-1.2L-3.1 1.0ZM-3.1 4.3L3.0 2.1V4.2L-3.1 6.4Z" transform="translate(0 -2.6)"/></g><g transform="translate(623.3 296.98)" fill="#000"><path d="M-1.75 -5.9V7.2M1.55 -7.2V5.9" stroke="#000" stroke-width="0.8"/><path d="M-3.1 -1.1L3.0 -3.3V-1.2L-3.1 1.0ZM-3.1 4.3L3.0 2.1V4.2L-3.1 6.4Z" transform="translate(0 -2.6)"/></g><text x="636.9" y="244.75" text-anchor="middle" font-family="Liberation Serif, serif" font-weight="bold" font-size="15.2" fill="#000">6</text><text x="636.9" y="255.59" text-anchor="middle" font-family="Liberation Serif, serif" font-weight="bold" font-size="15.2" fill="#000">8</text><text x="636.9" y="299.6" text-anchor="middle" font-family="Liberation Serif, serif" font-weight="bold" font-size="15.2" fill="#000">6</text><text x="636.9" y="310.44" text-anchor="middle" font-family="Liberation Serif, serif" font-weight="bold" font-size="15.2" fill="#000">8</text><ellipse cx="651.2" cy="234" rx="3.8" ry="2.5" fill="#000" transform="rotate(-24 651.2 234)"/><path d="M647.85 234.8V263.7" stroke="#000" stroke-width="0.56" fill="none"/><ellipse cx="668.95" cy="236.71" rx="3.8" ry="2.5" fill="#000" transform="rotate(-24 668.95 236.71)"/><path d="M665.6 237.51V264.2" stroke="#000" stroke-width="0.56" fill="none"/><ellipse cx="686.7" cy="234" rx="3.8" ry="2.5" fill="#000" transform="rotate(-24 686.7 234)"/><path d="M683.35 234.8V264.7" stroke="#000" stroke-width="0.56" fill="none"/><ellipse cx="704.45" cy="242.13" rx="3.8" ry="2.5" fill="#000" transform="rotate(-24 704.45 242.13)"/><path d="M701.1 242.93V265.2" stroke="#000" stroke-width="0.56" fill="none"/><ellipse cx="722.2" cy="244.84" rx="3.8" ry="2.5" fill="#000" transform="rotate(-24 722.2 244.84)"/><path d="M718.85 245.64V265.7" stroke="#000" stroke-width="0.56" fill="none"/><ellipse cx="739.95" cy="236.71" rx="3.8" ry="2.5" fill="#000" transform="rotate(-24 739.95 236.71)"/><path d="M736.6 237.51V266.2" stroke="#000" stroke-width="0.56" fill="none"/><path d="M647.5 261.35L736.95 263.85L736.95 266.55L647.5 264.05Z" fill="#000"/><path d="M646 315.95H656.4" stroke="#000" stroke-width="0.5"/><path d="M646 321.37H656.4" stroke="#000" stroke-width="0.5"/><ellipse cx="651.2" cy="324.08" rx="3.8" ry="2.5" fill="#000" transform="rotate(-24 651.2 324.08)"/><path d="M654.45 323.28V299.69" stroke="#000" stroke-width="0.56" fill="none"/><ellipse cx="686.7" cy="313.24" rx="3.8" ry="2.5" fill="#000" transform="rotate(-24 686.7 313.24)"/><path d="M689.95 312.44V294.27" stroke="#000" stroke-width="0.56" fill="none"/><ellipse cx="722.2" cy="307.82" rx="3.8" ry="2.5" fill="#000" transform="rotate(-24 722.2 307.82)"/><path d="M725.45 307.02V288.85" stroke="#000" stroke-width="0.56" fill="none"/><ellipse cx="765.3" cy="234" rx="3.8" ry="2.5" fill="#000" transform="rotate(-24 765.3 234)"/><path d="M761.95 234.8V263.3" stroke="#000" stroke-width="0.56" fill="none"/><ellipse cx="783.05" cy="242.13" rx="3.8" ry="2.5" fill="#000" transform="rotate(-24 783.05 242.13)"/><path d="M779.7 242.93V263.78" stroke="#000" stroke-width="0.56" fill="none"/><ellipse cx="800.8" cy="244.84" rx="3.8" ry="2.5" fill="#000" transform="rotate(-24 800.8 244.84)"/><path d="M797.45 245.64V264.26" stroke="#000" stroke-width="0.56" fill="none"/><path d="M813.35 228.58H823.75" stroke="#000" stroke-width="0.5"/><ellipse cx="818.55" cy="228.58" rx="3.8" ry="2.5" fill="#000" transform="rotate(-24 818.55 228.58)"/><path d="M815.2 229.38V264.74" stroke="#000" stroke-width="0.56" fill="none"/><ellipse cx="836.3" cy="234" rx="3.8" ry="2.5" fill="#000" transform="rotate(-24 836.3 234)"/><path d="M832.95 234.8V265.22" stroke="#000" stroke-width="0.56" fill="none"/><ellipse cx="854.05" cy="236.71" rx="3.8" ry="2.5" fill="#000" transform="rotate(-24 854.05 236.71)"/><path d="M850.7 237.51V265.7" stroke="#000" stroke-width="0.56" fill="none"/><path d="M761.6 260.95L851.05 263.35L851.05 266.05L761.6 263.65Z" fill="#000"/><path d="M760.1 315.95H770.5" stroke="#000" stroke-width="0.5"/><path d="M760.1 321.37H770.5" stroke="#000" stroke-width="0.5"/><ellipse cx="765.3" cy="324.08" rx="3.8" ry="2.5" fill="#000" transform="rotate(-24 765.3 324.08)"/><path d="M768.55 323.28V299.69" stroke="#000" stroke-width="0.56" fill="none"/><ellipse cx="800.8" cy="313.24" rx="3.8" ry="2.5" fill="#000" transform="rotate(-24 800.8 313.24)"/><path d="M804.05 312.44V294.27" stroke="#000" stroke-width="0.56" fill="none"/><ellipse cx="836.3" cy="310.53" rx="3.8" ry="2.5" fill="#000" transform="rotate(-24 836.3 310.53)"/><path d="M839.55 309.73V291.56" stroke="#000" stroke-width="0.56" fill="none"/><ellipse cx="879.4" cy="234" rx="3.8" ry="2.5" fill="#000" transform="rotate(-24 879.4 234)"/><path d="M876.05 234.8V263.3" stroke="#000" stroke-width="0.56" fill="none"/><ellipse cx="897.15" cy="236.71" rx="3.8" ry="2.5" fill="#000" transform="rotate(-24 897.15 236.71)"/><path d="M893.8 237.51V263.8" stroke="#000" stroke-width="0.56" fill="none"/><ellipse cx="914.9" cy="234" rx="3.8" ry="2.5" fill="#000" transform="rotate(-24 914.9 234)"/><path d="M911.55 234.8V264.3" stroke="#000" stroke-width="0.56" fill="none"/><ellipse cx="932.65" cy="242.13" rx="3.8" ry="2.5" fill="#000" transform="rotate(-24 932.65 242.13)"/><path d="M929.3 242.93V264.8" stroke="#000" stroke-width="0.56" fill="none"/><ellipse cx="950.4" cy="244.84" rx="3.8" ry="2.5" fill="#000" transform="rotate(-24 950.4 244.84)"/><path d="M947.05 245.64V265.3" stroke="#000" stroke-width="0.56" fill="none"/><ellipse cx="968.15" cy="236.71" rx="3.8" ry="2.5" fill="#000" transform="rotate(-24 968.15 236.71)"/><path d="M964.8 237.51V265.8" stroke="#000" stroke-width="0.56" fill="none"/><path d="M875.7 260.95L965.15 263.45L965.15 266.15L875.7 263.65Z" fill="#000"/><path d="M874.2 315.95H884.6" stroke="#000" stroke-width="0.5"/><path d="M874.2 321.37H884.6" stroke="#000" stroke-width="0.5"/><ellipse cx="879.4" cy="324.08" rx="3.8" ry="2.5" fill="#000" transform="rotate(-24 879.4 324.08)"/><path d="M882.65 323.28V299.69" stroke="#000" stroke-width="0.56" fill="none"/><ellipse cx="914.9" cy="313.24" rx="3.8" ry="2.5" fill="#000" transform="rotate(-24 914.9 313.24)"/><path d="M918.15 312.44V294.27" stroke="#000" stroke-width="0.56" fill="none"/><ellipse cx="950.4" cy="307.82" rx="3.8" ry="2.5" fill="#000" transform="rotate(-24 950.4 307.82)"/><path d="M953.65 307.02V288.85" stroke="#000" stroke-width="0.56" fill="none"/><ellipse cx="993.8" cy="234" rx="3.8" ry="2.5" fill="#000" transform="rotate(-24 993.8 234)"/><path d="M990.45 234.8V263.4" stroke="#000" stroke-width="0.56" fill="none"/><ellipse cx="1011.55" cy="242.13" rx="3.8" ry="2.5" fill="#000" transform="rotate(-24 1011.55 242.13)"/><path d="M1008.2 242.93V263.4" stroke="#000" stroke-width="0.56" fill="none"/><ellipse cx="1029.3" cy="244.84" rx="3.8" ry="2.5" fill="#000" transform="rotate(-24 1029.3 244.84)"/><path d="M1025.95 245.64V263.4" stroke="#000" stroke-width="0.56" fill="none"/><path d="M1041.85 228.58H1052.25" stroke="#000" stroke-width="0.5"/><ellipse cx="1047.05" cy="228.58" rx="3.8" ry="2.5" fill="#000" transform="rotate(-24 1047.05 228.58)"/><path d="M1043.7 229.38V263.4" stroke="#000" stroke-width="0.56" fill="none"/><path d="M1059.6 228.58H1070" stroke="#000" stroke-width="0.5"/><ellipse cx="1064.8" cy="225.87" rx="3.8" ry="2.5" fill="#000" transform="rotate(-24 1064.8 225.87)"/><path d="M1061.45 226.67V263.4" stroke="#000" stroke-width="0.56" fill="none"/><ellipse cx="1082.55" cy="234" rx="3.8" ry="2.5" fill="#000" transform="rotate(-24 1082.55 234)"/><path d="M1079.2 234.8V263.4" stroke="#000" stroke-width="0.56" fill="none"/><path d="M990.1 261.05L1079.55 261.05L1079.55 263.75L990.1 263.75Z" fill="#000"/><path d="M988.6 315.95H999" stroke="#000" stroke-width="0.5"/><path d="M988.6 321.37H999" stroke="#000" stroke-width="0.5"/><ellipse cx="993.8" cy="324.08" rx="3.8" ry="2.5" fill="#000" transform="rotate(-24 993.8 324.08)"/><path d="M997.05 323.28V299.69" stroke="#000" stroke-width="0.56" fill="none"/><ellipse cx="1029.3" cy="313.24" rx="3.8" ry="2.5" fill="#000" transform="rotate(-24 1029.3 313.24)"/><path d="M1032.55 312.44V294.27" stroke="#000" stroke-width="0.56" fill="none"/><ellipse cx="1064.8" cy="310.53" rx="3.8" ry="2.5" fill="#000" transform="rotate(-24 1064.8 310.53)"/><path d="M1068.05 309.73V291.56" stroke="#000" stroke-width="0.56" fill="none"/><path d="M589.3 353.3H1097.7M589.3 358.72H1097.7M589.3 364.14H1097.7M589.3 369.56H1097.7M589.3 374.98H1097.7" stroke="#000" stroke-width="0.5" fill="none"/><path d="M589.3 408.3H1097.7M589.3 413.72H1097.7M589.3 419.14H1097.7M589.3 424.56H1097.7M589.3 429.98H1097.7" stroke="#000" stroke-width="0.5" fill="none"/><path d="M589.3 352.95V430.33" stroke="#000" stroke-width="0.5" fill="none"/><path d="M1097.7 352.95V430.33" stroke="#000" stroke-width="0.5" fill="none"/><path d="M746.6 353.3V429.98" stroke="#000" stroke-width="0.5" fill="none"/><path d="M867.3 353.3V429.98" stroke="#000" stroke-width="0.5" fill="none"/><path d="M987.7 353.3V429.98" stroke="#000" stroke-width="0.5" fill="none"/><path transform="translate(580.77 429.98) scale(0.03665 0.07668)" d="M53 -509Q84 -511 107 -533Q130 -555 130 -595Q130 -615 125 -634Q120 -653 108 -671Q85 -706 68 -743Q50 -780 50 -835Q50 -879 72 -913Q93 -947 129 -970Q165 -992 207 -1000L211 -976Q167 -954 139 -917Q111 -880 111 -833Q111 -807 120 -778Q128 -750 144 -718Q176 -654 176 -602Q176 -577 168 -558Q163 -545 152 -532Q141 -518 131 -509Q121 -500 117 -500Q138 -490 157 -462Q176 -433 176 -398Q176 -345 144 -283Q111 -220 111 -167Q111 -120 139 -84Q167 -47 211 -24L207 0Q165 -8 129 -30Q93 -53 72 -88Q50 -122 50 -165Q50 -210 60 -240Q71 -271 90 -298Q105 -320 118 -347Q130 -374 130 -405Q130 -445 108 -466Q85 -487 53 -491Z" fill="#000"/><path transform="translate(592.24 373.79) scale(0.02111 0.02263)" d="M314 -801Q300 -854 291 -906Q282 -958 282 -1012Q282 -1059 288 -1100Q295 -1142 307 -1177Q320 -1217 341 -1252Q362 -1288 386 -1311Q409 -1334 427 -1334Q451 -1334 493 -1249Q514 -1206 524 -1156Q534 -1106 534 -1049Q534 -978 515 -908Q496 -837 460 -775Q423 -713 372 -666L407 -498Q422 -500 432 -501Q442 -502 447 -502Q508 -502 556 -468Q604 -433 632 -377Q661 -321 661 -254Q661 -177 622 -116Q582 -54 503 -25Q508 -8 532 117Q538 147 541 164Q544 182 545 195Q546 208 546 225Q546 275 522 314Q497 354 456 376Q414 398 363 398Q311 398 271 378Q231 359 208 324Q185 290 185 245Q185 197 212 165Q238 133 287 133Q329 133 356 164Q382 194 382 236Q382 272 357 299Q332 326 292 326H282Q308 365 364 365Q433 365 472 320Q511 275 511 205Q511 188 507 160Q503 131 493 91Q483 51 478 25Q472 -1 470 -12Q436 -2 390 -2Q304 -2 222 -52Q142 -102 96 -184Q50 -266 50 -361Q50 -451 91 -530Q132 -609 192 -675Q253 -741 314 -801ZM341 -826Q364 -838 390 -870Q416 -903 440 -945Q464 -987 479 -1030Q494 -1072 494 -1106Q494 -1142 483 -1163Q472 -1184 445 -1184Q421 -1184 398 -1162Q376 -1140 358 -1104Q341 -1067 331 -1022Q321 -977 321 -930Q321 -898 328 -872Q334 -846 341 -826ZM398 -379Q371 -373 347 -354Q323 -334 308 -306Q294 -279 294 -248Q294 -223 307 -196Q320 -170 339 -154Q352 -142 365 -136Q380 -129 380 -123Q380 -120 370 -117Q332 -126 302 -151Q271 -176 254 -212Q236 -247 236 -287Q236 -330 254 -370Q271 -410 302 -442Q334 -474 374 -490L345 -641Q229 -547 174 -456Q120 -366 120 -277Q120 -212 154 -156Q188 -100 247 -66Q306 -31 380 -31Q400 -31 420 -35Q441 -39 464 -45ZM495 -55Q593 -97 593 -227Q593 -270 571 -306Q549 -341 512 -362Q475 -383 429 -383Z" fill="#000"/><path transform="translate(592.24 428.79) scale(0.02111 0.02263)" d="M314 -801Q300 -854 291 -906Q282 -958 282 -1012Q282 -1059 288 -1100Q295 -1142 307 -1177Q320 -1217 341 -1252Q362 -1288 386 -1311Q409 -1334 427 -1334Q451 -1334 493 -1249Q514 -1206 524 -1156Q534 -1106 534 -1049Q534 -978 515 -908Q496 -837 460 -775Q423 -713 372 -666L407 -498Q422 -500 432 -501Q442 -502 447 -502Q508 -502 556 -468Q604 -433 632 -377Q661 -321 661 -254Q661 -177 622 -116Q582 -54 503 -25Q508 -8 532 117Q538 147 541 164Q544 182 545 195Q546 208 546 225Q546 275 522 314Q497 354 456 376Q414 398 363 398Q311 398 271 378Q231 359 208 324Q185 290 185 245Q185 197 212 165Q238 133 287 133Q329 133 356 164Q382 194 382 236Q382 272 357 299Q332 326 292 326H282Q308 365 364 365Q433 365 472 320Q511 275 511 205Q511 188 507 160Q503 131 493 91Q483 51 478 25Q472 -1 470 -12Q436 -2 390 -2Q304 -2 222 -52Q142 -102 96 -184Q50 -266 50 -361Q50 -451 91 -530Q132 -609 192 -675Q253 -741 314 -801ZM341 -826Q364 -838 390 -870Q416 -903 440 -945Q464 -987 479 -1030Q494 -1072 494 -1106Q494 -1142 483 -1163Q472 -1184 445 -1184Q421 -1184 398 -1162Q376 -1140 358 -1104Q341 -1067 331 -1022Q321 -977 321 -930Q321 -898 328 -872Q334 -846 341 -826ZM398 -379Q371 -373 347 -354Q323 -334 308 -306Q294 -279 294 -248Q294 -223 307 -196Q320 -170 339 -154Q352 -142 365 -136Q380 -129 380 -123Q380 -120 370 -117Q332 -126 302 -151Q271 -176 254 -212Q236 -247 236 -287Q236 -330 254 -370Q271 -410 302 -442Q334 -474 374 -490L345 -641Q229 -547 174 -456Q120 -366 120 -277Q120 -212 154 -156Q188 -100 247 -66Q306 -31 380 -31Q400 -31 420 -35Q441 -39 464 -45ZM495 -55Q593 -97 593 -227Q593 -270 571 -306Q549 -341 512 -362Q475 -383 429 -383Z" fill="#000"/><g transform="translate(616.2 353.3)" fill="#000"><path d="M-1.75 -5.9V7.2M1.55 -7.2V5.9" stroke="#000" stroke-width="0.8"/><path d="M-3.1 -1.1L3.0 -3.3V-1.2L-3.1 1.0ZM-3.1 4.3L3.0 2.1V4.2L-3.1 6.4Z" transform="translate(0 -2.6)"/></g><g transform="translate(623.3 361.43)" fill="#000"><path d="M-1.75 -5.9V7.2M1.55 -7.2V5.9" stroke="#000" stroke-width="0.8"/><path d="M-3.1 -1.1L3.0 -3.3V-1.2L-3.1 1.0ZM-3.1 4.3L3.0 2.1V4.2L-3.1 6.4Z" transform="translate(0 -2.6)"/></g><g transform="translate(616.2 408.3)" fill="#000"><path d="M-1.75 -5.9V7.2M1.55 -7.2V5.9" stroke="#000" stroke-width="0.8"/><path d="M-3.1 -1.1L3.0 -3.3V-1.2L-3.1 1.0ZM-3.1 4.3L3.0 2.1V4.2L-3.1 6.4Z" transform="translate(0 -2.6)"/></g><g transform="translate(623.3 416.43)" fill="#000"><path d="M-1.75 -5.9V7.2M1.55 -7.2V5.9" stroke="#000" stroke-width="0.8"/><path d="M-3.1 -1.1L3.0 -3.3V-1.2L-3.1 1.0ZM-3.1 4.3L3.0 2.1V4.2L-3.1 6.4Z" transform="translate(0 -2.6)"/></g><ellipse cx="636.5" cy="356.01" rx="3.8" ry="2.5" fill="#000" transform="rotate(-24 636.5 356.01)"/><path d="M633.15 356.81V385.3" stroke="#000" stroke-width="0.56" fill="none"/><ellipse cx="655.3" cy="358.72" rx="3.8" ry="2.5" fill="#000" transform="rotate(-24 655.3 358.72)"/><path d="M651.95 359.52V385.94" stroke="#000" stroke-width="0.56" fill="none"/><ellipse cx="674.1" cy="356.01" rx="3.8" ry="2.5" fill="#000" transform="rotate(-24 674.1 356.01)"/><path d="M670.75 356.81V386.58" stroke="#000" stroke-width="0.56" fill="none"/><ellipse cx="692.9" cy="366.85" rx="3.8" ry="2.5" fill="#000" transform="rotate(-24 692.9 366.85)"/><path d="M689.55 367.65V387.22" stroke="#000" stroke-width="0.56" fill="none"/><ellipse cx="711.7" cy="364.14" rx="3.8" ry="2.5" fill="#000" transform="rotate(-24 711.7 364.14)"/><path d="M708.35 364.94V387.86" stroke="#000" stroke-width="0.56" fill="none"/><ellipse cx="730.5" cy="358.72" rx="3.8" ry="2.5" fill="#000" transform="rotate(-24 730.5 358.72)"/><path d="M727.15 359.52V388.5" stroke="#000" stroke-width="0.56" fill="none"/><path d="M632.8 382.95L727.5 386.15L727.5 388.85L632.8 385.65Z" fill="#000"/><path d="M631.3 435.4H641.7" stroke="#000" stroke-width="0.5"/><path d="M631.3 440.82H641.7" stroke="#000" stroke-width="0.5"/><path d="M631.3 446.24H641.7" stroke="#000" stroke-width="0.5"/><ellipse cx="636.5" cy="446.24" rx="3.8" ry="2.5" fill="#000" transform="rotate(-24 636.5 446.24)"/><path d="M639.75 445.44V419.14" stroke="#000" stroke-width="0.56" fill="none"/><path d="M668.9 435.4H679.3" stroke="#000" stroke-width="0.5"/><path d="M668.9 440.82H679.3" stroke="#000" stroke-width="0.5"/><ellipse cx="674.1" cy="440.82" rx="3.8" ry="2.5" fill="#000" transform="rotate(-24 674.1 440.82)"/><path d="M677.35 440.02V419.14" stroke="#000" stroke-width="0.56" fill="none"/><path d="M706.5 435.4H716.9" stroke="#000" stroke-width="0.5"/><ellipse cx="711.7" cy="435.4" rx="3.8" ry="2.5" fill="#000" transform="rotate(-24 711.7 435.4)"/><path d="M714.95 434.6V416.43" stroke="#000" stroke-width="0.56" fill="none"/><ellipse cx="757" cy="356.01" rx="3.8" ry="2.5" fill="#000" transform="rotate(-24 757 356.01)"/><path d="M753.65 356.81V376.8" stroke="#000" stroke-width="0.56" fill="none"/><ellipse cx="775.8" cy="358.72" rx="3.8" ry="2.5" fill="#000" transform="rotate(-24 775.8 358.72)"/><path d="M772.45 359.52V377.48" stroke="#000" stroke-width="0.56" fill="none"/><ellipse cx="794.6" cy="356.01" rx="3.8" ry="2.5" fill="#000" transform="rotate(-24 794.6 356.01)"/><path d="M791.25 356.81V378.16" stroke="#000" stroke-width="0.56" fill="none"/><path d="M808.2 347.88H818.6" stroke="#000" stroke-width="0.5"/><ellipse cx="813.4" cy="347.88" rx="3.8" ry="2.5" fill="#000" transform="rotate(-24 813.4 347.88)"/><path d="M810.05 348.68V378.84" stroke="#000" stroke-width="0.56" fill="none"/><ellipse cx="832.2" cy="353.3" rx="3.8" ry="2.5" fill="#000" transform="rotate(-24 832.2 353.3)"/><path d="M828.85 354.1V379.52" stroke="#000" stroke-width="0.56" fill="none"/><ellipse cx="851" cy="358.72" rx="3.8" ry="2.5" fill="#000" transform="rotate(-24 851 358.72)"/><path d="M847.65 359.52V380.2" stroke="#000" stroke-width="0.56" fill="none"/><path d="M753.3 374.45L848 377.85L848 380.55L753.3 377.15Z" fill="#000"/><path d="M751.8 435.4H762.2" stroke="#000" stroke-width="0.5"/><path d="M751.8 440.82H762.2" stroke="#000" stroke-width="0.5"/><path d="M751.8 446.24H762.2" stroke="#000" stroke-width="0.5"/><ellipse cx="757" cy="446.24" rx="3.8" ry="2.5" fill="#000" transform="rotate(-24 757 446.24)"/><path d="M760.25 445.44V419.14" stroke="#000" stroke-width="0.56" fill="none"/><path d="M789.4 435.4H799.8" stroke="#000" stroke-width="0.5"/><path d="M789.4 440.82H799.8" stroke="#000" stroke-width="0.5"/><ellipse cx="794.6" cy="440.82" rx="3.8" ry="2.5" fill="#000" transform="rotate(-24 794.6 440.82)"/><path d="M797.85 440.02V419.14" stroke="#000" stroke-width="0.56" fill="none"/><ellipse cx="832.2" cy="429.98" rx="3.8" ry="2.5" fill="#000" transform="rotate(-24 832.2 429.98)"/><path d="M835.45 429.18V411.01" stroke="#000" stroke-width="0.56" fill="none"/><ellipse cx="878.2" cy="356.01" rx="3.8" ry="2.5" fill="#000" transform="rotate(-24 878.2 356.01)"/><path d="M874.85 356.81V384.9" stroke="#000" stroke-width="0.56" fill="none"/><ellipse cx="897" cy="358.72" rx="3.8" ry="2.5" fill="#000" transform="rotate(-24 897 358.72)"/><path d="M893.65 359.52V385.62" stroke="#000" stroke-width="0.56" fill="none"/><ellipse cx="915.8" cy="356.01" rx="3.8" ry="2.5" fill="#000" transform="rotate(-24 915.8 356.01)"/><path d="M912.45 356.81V386.34" stroke="#000" stroke-width="0.56" fill="none"/><ellipse cx="934.6" cy="366.85" rx="3.8" ry="2.5" fill="#000" transform="rotate(-24 934.6 366.85)"/><path d="M931.25 367.65V387.06" stroke="#000" stroke-width="0.56" fill="none"/><ellipse cx="953.4" cy="364.14" rx="3.8" ry="2.5" fill="#000" transform="rotate(-24 953.4 364.14)"/><path d="M950.05 364.94V387.78" stroke="#000" stroke-width="0.56" fill="none"/><ellipse cx="972.2" cy="358.72" rx="3.8" ry="2.5" fill="#000" transform="rotate(-24 972.2 358.72)"/><path d="M968.85 359.52V388.5" stroke="#000" stroke-width="0.56" fill="none"/><path d="M874.5 382.55L969.2 386.15L969.2 388.85L874.5 385.25Z" fill="#000"/><path d="M873 435.4H883.4" stroke="#000" stroke-width="0.5"/><path d="M873 440.82H883.4" stroke="#000" stroke-width="0.5"/><path d="M873 446.24H883.4" stroke="#000" stroke-width="0.5"/><ellipse cx="878.2" cy="446.24" rx="3.8" ry="2.5" fill="#000" transform="rotate(-24 878.2 446.24)"/><path d="M881.45 445.44V419.14" stroke="#000" stroke-width="0.56" fill="none"/><path d="M910.6 435.4H921" stroke="#000" stroke-width="0.5"/><path d="M910.6 440.82H921" stroke="#000" stroke-width="0.5"/><ellipse cx="915.8" cy="440.82" rx="3.8" ry="2.5" fill="#000" transform="rotate(-24 915.8 440.82)"/><path d="M919.05 440.02V419.14" stroke="#000" stroke-width="0.56" fill="none"/><path d="M948.2 435.4H958.6" stroke="#000" stroke-width="0.5"/><ellipse cx="953.4" cy="435.4" rx="3.8" ry="2.5" fill="#000" transform="rotate(-24 953.4 435.4)"/><path d="M956.65 434.6V416.43" stroke="#000" stroke-width="0.56" fill="none"/><ellipse cx="998.8" cy="356.01" rx="3.8" ry="2.5" fill="#000" transform="rotate(-24 998.8 356.01)"/><ellipse cx="998.8" cy="361.43" rx="3.8" ry="2.5" fill="#000" transform="rotate(-24 998.8 361.43)"/><path d="M995.45 356.81V381.8" stroke="#000" stroke-width="0.56" fill="none"/><ellipse cx="1017.6" cy="358.72" rx="3.8" ry="2.5" fill="#000" transform="rotate(-24 1017.6 358.72)"/><path d="M1014.25 359.52V384.03" stroke="#000" stroke-width="0.56" fill="none"/><ellipse cx="1036.4" cy="353.3" rx="3.8" ry="2.5" fill="#000" transform="rotate(-24 1036.4 353.3)"/><ellipse cx="1036.4" cy="366.85" rx="3.8" ry="2.5" fill="#000" transform="rotate(-24 1036.4 366.85)"/><path d="M1033.05 354.1V386.27" stroke="#000" stroke-width="0.56" fill="none"/><ellipse cx="1055.2" cy="364.14" rx="3.8" ry="2.5" fill="#000" transform="rotate(-24 1055.2 364.14)"/><path d="M1051.85 364.94V388.5" stroke="#000" stroke-width="0.56" fill="none"/><path d="M995.1 379.45L1052.2 386.15L1052.2 388.85L995.1 382.15Z" fill="#000"/><ellipse cx="1074" cy="356.01" rx="3.8" ry="2.5" fill="#000" transform="rotate(-24 1074 356.01)"/><ellipse cx="1074" cy="361.43" rx="3.8" ry="2.5" fill="#000" transform="rotate(-24 1074 361.43)"/><path d="M1070.65 356.81V380.5" stroke="#000" stroke-width="0.56" fill="none"/><path d="M993.6 435.4H1004" stroke="#000" stroke-width="0.5"/><path d="M993.6 440.82H1004" stroke="#000" stroke-width="0.5"/><path d="M993.6 446.24H1004" stroke="#000" stroke-width="0.5"/><ellipse cx="998.8" cy="446.24" rx="3.8" ry="2.5" fill="#000" transform="rotate(-24 998.8 446.24)"/><path d="M1002.05 445.44V419.14" stroke="#000" stroke-width="0.56" fill="none"/><path d="M1031.2 435.4H1041.6" stroke="#000" stroke-width="0.5"/><path d="M1031.2 440.82H1041.6" stroke="#000" stroke-width="0.5"/><ellipse cx="1036.4" cy="440.82" rx="3.8" ry="2.5" fill="#000" transform="rotate(-24 1036.4 440.82)"/><path d="M1039.65 440.02V419.14" stroke="#000" stroke-width="0.56" fill="none"/><ellipse cx="1074" cy="429.98" rx="3.8" ry="2.5" fill="#000" transform="rotate(-24 1074 429.98)"/><path d="M1077.25 429.18V411.01" stroke="#000" stroke-width="0.56" fill="none"/><path d="M589.3 472.5H1097.7M589.3 477.92H1097.7M589.3 483.34H1097.7M589.3 488.76H1097.7M589.3 494.18H1097.7" stroke="#000" stroke-width="0.5" fill="none"/><path d="M589.3 527.7H1097.7M589.3 533.12H1097.7M589.3 538.54H1097.7M589.3 543.96H1097.7M589.3 549.38H1097.7" stroke="#000" stroke-width="0.5" fill="none"/><path d="M589.3 472.15V549.73" stroke="#000" stroke-width="0.5" fill="none"/><path d="M1097.7 472.15V549.73" stroke="#000" stroke-width="0.5" fill="none"/><path d="M743.7 472.5V549.38" stroke="#000" stroke-width="0.5" fill="none"/><path d="M861.8 472.5V549.38" stroke="#000" stroke-width="0.5" fill="none"/><path d="M979.7 472.5V549.38" stroke="#000" stroke-width="0.5" fill="none"/><path transform="translate(580.77 549.38) scale(0.03665 0.07688)" d="M53 -509Q84 -511 107 -533Q130 -555 130 -595Q130 -615 125 -634Q120 -653 108 -671Q85 -706 68 -743Q50 -780 50 -835Q50 -879 72 -913Q93 -947 129 -970Q165 -992 207 -1000L211 -976Q167 -954 139 -917Q111 -880 111 -833Q111 -807 120 -778Q128 -750 144 -718Q176 -654 176 -602Q176 -577 168 -558Q163 -545 152 -532Q141 -518 131 -509Q121 -500 117 -500Q138 -490 157 -462Q176 -433 176 -398Q176 -345 144 -283Q111 -220 111 -167Q111 -120 139 -84Q167 -47 211 -24L207 0Q165 -8 129 -30Q93 -53 72 -88Q50 -122 50 -165Q50 -210 60 -240Q71 -271 90 -298Q105 -320 118 -347Q130 -374 130 -405Q130 -445 108 -466Q85 -487 53 -491Z" fill="#000"/><path transform="translate(592.24 492.99) scale(0.02111 0.02263)" d="M314 -801Q300 -854 291 -906Q282 -958 282 -1012Q282 -1059 288 -1100Q295 -1142 307 -1177Q320 -1217 341 -1252Q362 -1288 386 -1311Q409 -1334 427 -1334Q451 -1334 493 -1249Q514 -1206 524 -1156Q534 -1106 534 -1049Q534 -978 515 -908Q496 -837 460 -775Q423 -713 372 -666L407 -498Q422 -500 432 -501Q442 -502 447 -502Q508 -502 556 -468Q604 -433 632 -377Q661 -321 661 -254Q661 -177 622 -116Q582 -54 503 -25Q508 -8 532 117Q538 147 541 164Q544 182 545 195Q546 208 546 225Q546 275 522 314Q497 354 456 376Q414 398 363 398Q311 398 271 378Q231 359 208 324Q185 290 185 245Q185 197 212 165Q238 133 287 133Q329 133 356 164Q382 194 382 236Q382 272 357 299Q332 326 292 326H282Q308 365 364 365Q433 365 472 320Q511 275 511 205Q511 188 507 160Q503 131 493 91Q483 51 478 25Q472 -1 470 -12Q436 -2 390 -2Q304 -2 222 -52Q142 -102 96 -184Q50 -266 50 -361Q50 -451 91 -530Q132 -609 192 -675Q253 -741 314 -801ZM341 -826Q364 -838 390 -870Q416 -903 440 -945Q464 -987 479 -1030Q494 -1072 494 -1106Q494 -1142 483 -1163Q472 -1184 445 -1184Q421 -1184 398 -1162Q376 -1140 358 -1104Q341 -1067 331 -1022Q321 -977 321 -930Q321 -898 328 -872Q334 -846 341 -826ZM398 -379Q371 -373 347 -354Q323 -334 308 -306Q294 -279 294 -248Q294 -223 307 -196Q320 -170 339 -154Q352 -142 365 -136Q380 -129 380 -123Q380 -120 370 -117Q332 -126 302 -151Q271 -176 254 -212Q236 -247 236 -287Q236 -330 254 -370Q271 -410 302 -442Q334 -474 374 -490L345 -641Q229 -547 174 -456Q120 -366 120 -277Q120 -212 154 -156Q188 -100 247 -66Q306 -31 380 -31Q400 -31 420 -35Q441 -39 464 -45ZM495 -55Q593 -97 593 -227Q593 -270 571 -306Q549 -341 512 -362Q475 -383 429 -383Z" fill="#000"/><path transform="translate(592.24 548.19) scale(0.02111 0.02263)" d="M314 -801Q300 -854 291 -906Q282 -958 282 -1012Q282 -1059 288 -1100Q295 -1142 307 -1177Q320 -1217 341 -1252Q362 -1288 386 -1311Q409 -1334 427 -1334Q451 -1334 493 -1249Q514 -1206 524 -1156Q534 -1106 534 -1049Q534 -978 515 -908Q496 -837 460 -775Q423 -713 372 -666L407 -498Q422 -500 432 -501Q442 -502 447 -502Q508 -502 556 -468Q604 -433 632 -377Q661 -321 661 -254Q661 -177 622 -116Q582 -54 503 -25Q508 -8 532 117Q538 147 541 164Q544 182 545 195Q546 208 546 225Q546 275 522 314Q497 354 456 376Q414 398 363 398Q311 398 271 378Q231 359 208 324Q185 290 185 245Q185 197 212 165Q238 133 287 133Q329 133 356 164Q382 194 382 236Q382 272 357 299Q332 326 292 326H282Q308 365 364 365Q433 365 472 320Q511 275 511 205Q511 188 507 160Q503 131 493 91Q483 51 478 25Q472 -1 470 -12Q436 -2 390 -2Q304 -2 222 -52Q142 -102 96 -184Q50 -266 50 -361Q50 -451 91 -530Q132 -609 192 -675Q253 -741 314 -801ZM341 -826Q364 -838 390 -870Q416 -903 440 -945Q464 -987 479 -1030Q494 -1072 494 -1106Q494 -1142 483 -1163Q472 -1184 445 -1184Q421 -1184 398 -1162Q376 -1140 358 -1104Q341 -1067 331 -1022Q321 -977 321 -930Q321 -898 328 -872Q334 -846 341 -826ZM398 -379Q371 -373 347 -354Q323 -334 308 -306Q294 -279 294 -248Q294 -223 307 -196Q320 -170 339 -154Q352 -142 365 -136Q380 -129 380 -123Q380 -120 370 -117Q332 -126 302 -151Q271 -176 254 -212Q236 -247 236 -287Q236 -330 254 -370Q271 -410 302 -442Q334 -474 374 -490L345 -641Q229 -547 174 -456Q120 -366 120 -277Q120 -212 154 -156Q188 -100 247 -66Q306 -31 380 -31Q400 -31 420 -35Q441 -39 464 -45ZM495 -55Q593 -97 593 -227Q593 -270 571 -306Q549 -341 512 -362Q475 -383 429 -383Z" fill="#000"/><g transform="translate(616.2 472.5)" fill="#000"><path d="M-1.75 -5.9V7.2M1.55 -7.2V5.9" stroke="#000" stroke-width="0.8"/><path d="M-3.1 -1.1L3.0 -3.3V-1.2L-3.1 1.0ZM-3.1 4.3L3.0 2.1V4.2L-3.1 6.4Z" transform="translate(0 -2.6)"/></g><g transform="translate(623.3 480.63)" fill="#000"><path d="M-1.75 -5.9V7.2M1.55 -7.2V5.9" stroke="#000" stroke-width="0.8"/><path d="M-3.1 -1.1L3.0 -3.3V-1.2L-3.1 1.0ZM-3.1 4.3L3.0 2.1V4.2L-3.1 6.4Z" transform="translate(0 -2.6)"/></g><g transform="translate(616.2 527.7)" fill="#000"><path d="M-1.75 -5.9V7.2M1.55 -7.2V5.9" stroke="#000" stroke-width="0.8"/><path d="M-3.1 -1.1L3.0 -3.3V-1.2L-3.1 1.0ZM-3.1 4.3L3.0 2.1V4.2L-3.1 6.4Z" transform="translate(0 -2.6)"/></g><g transform="translate(623.3 535.83)" fill="#000"><path d="M-1.75 -5.9V7.2M1.55 -7.2V5.9" stroke="#000" stroke-width="0.8"/><path d="M-3.1 -1.1L3.0 -3.3V-1.2L-3.1 1.0ZM-3.1 4.3L3.0 2.1V4.2L-3.1 6.4Z" transform="translate(0 -2.6)"/></g><ellipse cx="636.5" cy="472.5" rx="3.8" ry="2.5" fill="#000" transform="rotate(-24 636.5 472.5)"/><ellipse cx="636.5" cy="483.34" rx="3.8" ry="2.5" fill="#000" transform="rotate(-24 636.5 483.34)"/><path d="M633.15 473.3V504.5" stroke="#000" stroke-width="0.56" fill="none"/><ellipse cx="654.87" cy="475.21" rx="3.8" ry="2.5" fill="#000" transform="rotate(-24 654.87 475.21)"/><path d="M651.52 476.01V504.06" stroke="#000" stroke-width="0.56" fill="none"/><ellipse cx="673.24" cy="472.5" rx="3.8" ry="2.5" fill="#000" transform="rotate(-24 673.24 472.5)"/><path d="M669.89 473.3V503.62" stroke="#000" stroke-width="0.56" fill="none"/><ellipse cx="691.61" cy="480.63" rx="3.8" ry="2.5" fill="#000" transform="rotate(-24 691.61 480.63)"/><path d="M688.26 481.43V503.18" stroke="#000" stroke-width="0.56" fill="none"/><ellipse cx="709.98" cy="483.34" rx="3.8" ry="2.5" fill="#000" transform="rotate(-24 709.98 483.34)"/><path d="M706.63 484.14V502.74" stroke="#000" stroke-width="0.56" fill="none"/><ellipse cx="728.35" cy="475.21" rx="3.8" ry="2.5" fill="#000" transform="rotate(-24 728.35 475.21)"/><path d="M725 476.01V502.3" stroke="#000" stroke-width="0.56" fill="none"/><path d="M632.8 502.15L725.35 499.95L725.35 502.65L632.8 504.85Z" fill="#000"/><path d="M631.3 554.8H641.7" stroke="#000" stroke-width="0.5"/><path d="M631.3 560.22H641.7" stroke="#000" stroke-width="0.5"/><ellipse cx="636.5" cy="562.93" rx="3.8" ry="2.5" fill="#000" transform="rotate(-24 636.5 562.93)"/><path d="M639.75 562.13V538.54" stroke="#000" stroke-width="0.56" fill="none"/><ellipse cx="673.24" cy="552.09" rx="3.8" ry="2.5" fill="#000" transform="rotate(-24 673.24 552.09)"/><path d="M676.49 551.29V533.12" stroke="#000" stroke-width="0.56" fill="none"/><ellipse cx="709.98" cy="546.67" rx="3.8" ry="2.5" fill="#000" transform="rotate(-24 709.98 546.67)"/><path d="M713.23 545.87V527.7" stroke="#000" stroke-width="0.56" fill="none"/><ellipse cx="754.3" cy="472.5" rx="3.8" ry="2.5" fill="#000" transform="rotate(-24 754.3 472.5)"/><path d="M750.95 473.3V502" stroke="#000" stroke-width="0.56" fill="none"/><ellipse cx="772.67" cy="480.63" rx="3.8" ry="2.5" fill="#000" transform="rotate(-24 772.67 480.63)"/><path d="M769.32 481.43V502.56" stroke="#000" stroke-width="0.56" fill="none"/><ellipse cx="791.04" cy="483.34" rx="3.8" ry="2.5" fill="#000" transform="rotate(-24 791.04 483.34)"/><path d="M787.69 484.14V503.12" stroke="#000" stroke-width="0.56" fill="none"/><path d="M804.21 467.08H814.61" stroke="#000" stroke-width="0.5"/><ellipse cx="809.41" cy="467.08" rx="3.8" ry="2.5" fill="#000" transform="rotate(-24 809.41 467.08)"/><path d="M806.06 467.88V503.68" stroke="#000" stroke-width="0.56" fill="none"/><ellipse cx="827.78" cy="472.5" rx="3.8" ry="2.5" fill="#000" transform="rotate(-24 827.78 472.5)"/><path d="M824.43 473.3V504.24" stroke="#000" stroke-width="0.56" fill="none"/><ellipse cx="846.15" cy="475.21" rx="3.8" ry="2.5" fill="#000" transform="rotate(-24 846.15 475.21)"/><path d="M842.8 476.01V504.8" stroke="#000" stroke-width="0.56" fill="none"/><path d="M750.6 499.65L843.15 502.45L843.15 505.15L750.6 502.35Z" fill="#000"/><path d="M749.1 554.8H759.5" stroke="#000" stroke-width="0.5"/><path d="M749.1 560.22H759.5" stroke="#000" stroke-width="0.5"/><ellipse cx="754.3" cy="562.93" rx="3.8" ry="2.5" fill="#000" transform="rotate(-24 754.3 562.93)"/><path d="M757.55 562.13V538.54" stroke="#000" stroke-width="0.56" fill="none"/><ellipse cx="791.04" cy="552.09" rx="3.8" ry="2.5" fill="#000" transform="rotate(-24 791.04 552.09)"/><path d="M794.29 551.29V533.12" stroke="#000" stroke-width="0.56" fill="none"/><ellipse cx="827.78" cy="549.38" rx="3.8" ry="2.5" fill="#000" transform="rotate(-24 827.78 549.38)"/><path d="M831.03 548.58V530.41" stroke="#000" stroke-width="0.56" fill="none"/><ellipse cx="872.3" cy="472.5" rx="3.8" ry="2.5" fill="#000" transform="rotate(-24 872.3 472.5)"/><path d="M868.95 473.3V502" stroke="#000" stroke-width="0.56" fill="none"/><ellipse cx="890.67" cy="475.21" rx="3.8" ry="2.5" fill="#000" transform="rotate(-24 890.67 475.21)"/><path d="M887.32 476.01V502.56" stroke="#000" stroke-width="0.56" fill="none"/><ellipse cx="909.04" cy="472.5" rx="3.8" ry="2.5" fill="#000" transform="rotate(-24 909.04 472.5)"/><path d="M905.69 473.3V503.12" stroke="#000" stroke-width="0.56" fill="none"/><ellipse cx="927.41" cy="480.63" rx="3.8" ry="2.5" fill="#000" transform="rotate(-24 927.41 480.63)"/><path d="M924.06 481.43V503.68" stroke="#000" stroke-width="0.56" fill="none"/><ellipse cx="945.78" cy="483.34" rx="3.8" ry="2.5" fill="#000" transform="rotate(-24 945.78 483.34)"/><path d="M942.43 484.14V504.24" stroke="#000" stroke-width="0.56" fill="none"/><ellipse cx="964.15" cy="475.21" rx="3.8" ry="2.5" fill="#000" transform="rotate(-24 964.15 475.21)"/><path d="M960.8 476.01V504.8" stroke="#000" stroke-width="0.56" fill="none"/><path d="M868.6 499.65L961.15 502.45L961.15 505.15L868.6 502.35Z" fill="#000"/><path d="M867.1 554.8H877.5" stroke="#000" stroke-width="0.5"/><path d="M867.1 560.22H877.5" stroke="#000" stroke-width="0.5"/><ellipse cx="872.3" cy="562.93" rx="3.8" ry="2.5" fill="#000" transform="rotate(-24 872.3 562.93)"/><path d="M875.55 562.13V538.54" stroke="#000" stroke-width="0.56" fill="none"/><ellipse cx="909.04" cy="552.09" rx="3.8" ry="2.5" fill="#000" transform="rotate(-24 909.04 552.09)"/><path d="M912.29 551.29V533.12" stroke="#000" stroke-width="0.56" fill="none"/><ellipse cx="945.78" cy="546.67" rx="3.8" ry="2.5" fill="#000" transform="rotate(-24 945.78 546.67)"/><path d="M949.03 545.87V527.7" stroke="#000" stroke-width="0.56" fill="none"/><ellipse cx="990.2" cy="472.5" rx="3.8" ry="2.5" fill="#000" transform="rotate(-24 990.2 472.5)"/><path d="M986.85 473.3V507.3" stroke="#000" stroke-width="0.56" fill="none"/><ellipse cx="1008.57" cy="480.63" rx="3.8" ry="2.5" fill="#000" transform="rotate(-24 1008.57 480.63)"/><path d="M1005.22 481.43V505.64" stroke="#000" stroke-width="0.56" fill="none"/><ellipse cx="1026.94" cy="483.34" rx="3.8" ry="2.5" fill="#000" transform="rotate(-24 1026.94 483.34)"/><path d="M1023.59 484.14V503.98" stroke="#000" stroke-width="0.56" fill="none"/><path d="M1040.11 467.08H1050.51" stroke="#000" stroke-width="0.5"/><ellipse cx="1045.31" cy="467.08" rx="3.8" ry="2.5" fill="#000" transform="rotate(-24 1045.31 467.08)"/><path d="M1041.96 467.88V502.32" stroke="#000" stroke-width="0.56" fill="none"/><path d="M1058.48 467.08H1068.88" stroke="#000" stroke-width="0.5"/><ellipse cx="1063.68" cy="464.37" rx="3.8" ry="2.5" fill="#000" transform="rotate(-24 1063.68 464.37)"/><path d="M1060.33 465.17V500.66" stroke="#000" stroke-width="0.56" fill="none"/><path d="M1076.85 467.08H1087.25" stroke="#000" stroke-width="0.5"/><path d="M1076.85 461.66H1087.25" stroke="#000" stroke-width="0.5"/><ellipse cx="1082.05" cy="458.95" rx="3.8" ry="2.5" fill="#000" transform="rotate(-24 1082.05 458.95)"/><path d="M1078.7 459.75V499" stroke="#000" stroke-width="0.56" fill="none"/><path d="M986.5 504.95L1079.05 496.65L1079.05 499.35L986.5 507.65Z" fill="#000"/><path d="M985 554.8H995.4" stroke="#000" stroke-width="0.5"/><path d="M985 560.22H995.4" stroke="#000" stroke-width="0.5"/><ellipse cx="990.2" cy="562.93" rx="3.8" ry="2.5" fill="#000" transform="rotate(-24 990.2 562.93)"/><path d="M993.45 562.13V538.54" stroke="#000" stroke-width="0.56" fill="none"/><ellipse cx="1026.94" cy="552.09" rx="3.8" ry="2.5" fill="#000" transform="rotate(-24 1026.94 552.09)"/><path d="M1030.19 551.29V533.12" stroke="#000" stroke-width="0.56" fill="none"/><ellipse cx="1063.68" cy="549.38" rx="3.8" ry="2.5" fill="#000" transform="rotate(-24 1063.68 549.38)"/><path d="M1066.93 548.58V530.41" stroke="#000" stroke-width="0.56" fill="none"/><path d="M589.3 591.7H1096.5M589.3 597.12H1096.5M589.3 602.54H1096.5M589.3 607.96H1096.5M589.3 613.38H1096.5" stroke="#000" stroke-width="0.5" fill="none"/><path d="M589.3 647H1096.5M589.3 652.42H1096.5M589.3 657.84H1096.5M589.3 663.26H1096.5M589.3 668.68H1096.5" stroke="#000" stroke-width="0.5" fill="none"/><path d="M589.3 591.35V669.03" stroke="#000" stroke-width="0.5" fill="none"/><path d="M756.5 591.7V668.68" stroke="#000" stroke-width="0.5" fill="none"/><path d="M863.2 591.7V668.68" stroke="#000" stroke-width="0.5" fill="none"/><path d="M969.7 591.7V668.68" stroke="#000" stroke-width="0.5" fill="none"/><path transform="translate(580.77 668.68) scale(0.03665 0.07698)" d="M53 -509Q84 -511 107 -533Q130 -555 130 -595Q130 -615 125 -634Q120 -653 108 -671Q85 -706 68 -743Q50 -780 50 -835Q50 -879 72 -913Q93 -947 129 -970Q165 -992 207 -1000L211 -976Q167 -954 139 -917Q111 -880 111 -833Q111 -807 120 -778Q128 -750 144 -718Q176 -654 176 -602Q176 -577 168 -558Q163 -545 152 -532Q141 -518 131 -509Q121 -500 117 -500Q138 -490 157 -462Q176 -433 176 -398Q176 -345 144 -283Q111 -220 111 -167Q111 -120 139 -84Q167 -47 211 -24L207 0Q165 -8 129 -30Q93 -53 72 -88Q50 -122 50 -165Q50 -210 60 -240Q71 -271 90 -298Q105 -320 118 -347Q130 -374 130 -405Q130 -445 108 -466Q85 -487 53 -491Z" fill="#000"/><path transform="translate(592.24 612.19) scale(0.02111 0.02263)" d="M314 -801Q300 -854 291 -906Q282 -958 282 -1012Q282 -1059 288 -1100Q295 -1142 307 -1177Q320 -1217 341 -1252Q362 -1288 386 -1311Q409 -1334 427 -1334Q451 -1334 493 -1249Q514 -1206 524 -1156Q534 -1106 534 -1049Q534 -978 515 -908Q496 -837 460 -775Q423 -713 372 -666L407 -498Q422 -500 432 -501Q442 -502 447 -502Q508 -502 556 -468Q604 -433 632 -377Q661 -321 661 -254Q661 -177 622 -116Q582 -54 503 -25Q508 -8 532 117Q538 147 541 164Q544 182 545 195Q546 208 546 225Q546 275 522 314Q497 354 456 376Q414 398 363 398Q311 398 271 378Q231 359 208 324Q185 290 185 245Q185 197 212 165Q238 133 287 133Q329 133 356 164Q382 194 382 236Q382 272 357 299Q332 326 292 326H282Q308 365 364 365Q433 365 472 320Q511 275 511 205Q511 188 507 160Q503 131 493 91Q483 51 478 25Q472 -1 470 -12Q436 -2 390 -2Q304 -2 222 -52Q142 -102 96 -184Q50 -266 50 -361Q50 -451 91 -530Q132 -609 192 -675Q253 -741 314 -801ZM341 -826Q364 -838 390 -870Q416 -903 440 -945Q464 -987 479 -1030Q494 -1072 494 -1106Q494 -1142 483 -1163Q472 -1184 445 -1184Q421 -1184 398 -1162Q376 -1140 358 -1104Q341 -1067 331 -1022Q321 -977 321 -930Q321 -898 328 -872Q334 -846 341 -826ZM398 -379Q371 -373 347 -354Q323 -334 308 -306Q294 -279 294 -248Q294 -223 307 -196Q320 -170 339 -154Q352 -142 365 -136Q380 -129 380 -123Q380 -120 370 -117Q332 -126 302 -151Q271 -176 254 -212Q236 -247 236 -287Q236 -330 254 -370Q271 -410 302 -442Q334 -474 374 -490L345 -641Q229 -547 174 -456Q120 -366 120 -277Q120 -212 154 -156Q188 -100 247 -66Q306 -31 380 -31Q400 -31 420 -35Q441 -39 464 -45ZM495 -55Q593 -97 593 -227Q593 -270 571 -306Q549 -341 512 -362Q475 -383 429 -383Z" fill="#000"/><path transform="translate(592.24 667.49) scale(0.02111 0.02263)" d="M314 -801Q300 -854 291 -906Q282 -958 282 -1012Q282 -1059 288 -1100Q295 -1142 307 -1177Q320 -1217 341 -1252Q362 -1288 386 -1311Q409 -1334 427 -1334Q451 -1334 493 -1249Q514 -1206 524 -1156Q534 -1106 534 -1049Q534 -978 515 -908Q496 -837 460 -775Q423 -713 372 -666L407 -498Q422 -500 432 -501Q442 -502 447 -502Q508 -502 556 -468Q604 -433 632 -377Q661 -321 661 -254Q661 -177 622 -116Q582 -54 503 -25Q508 -8 532 117Q538 147 541 164Q544 182 545 195Q546 208 546 225Q546 275 522 314Q497 354 456 376Q414 398 363 398Q311 398 271 378Q231 359 208 324Q185 290 185 245Q185 197 212 165Q238 133 287 133Q329 133 356 164Q382 194 382 236Q382 272 357 299Q332 326 292 326H282Q308 365 364 365Q433 365 472 320Q511 275 511 205Q511 188 507 160Q503 131 493 91Q483 51 478 25Q472 -1 470 -12Q436 -2 390 -2Q304 -2 222 -52Q142 -102 96 -184Q50 -266 50 -361Q50 -451 91 -530Q132 -609 192 -675Q253 -741 314 -801ZM341 -826Q364 -838 390 -870Q416 -903 440 -945Q464 -987 479 -1030Q494 -1072 494 -1106Q494 -1142 483 -1163Q472 -1184 445 -1184Q421 -1184 398 -1162Q376 -1140 358 -1104Q341 -1067 331 -1022Q321 -977 321 -930Q321 -898 328 -872Q334 -846 341 -826ZM398 -379Q371 -373 347 -354Q323 -334 308 -306Q294 -279 294 -248Q294 -223 307 -196Q320 -170 339 -154Q352 -142 365 -136Q380 -129 380 -123Q380 -120 370 -117Q332 -126 302 -151Q271 -176 254 -212Q236 -247 236 -287Q236 -330 254 -370Q271 -410 302 -442Q334 -474 374 -490L345 -641Q229 -547 174 -456Q120 -366 120 -277Q120 -212 154 -156Q188 -100 247 -66Q306 -31 380 -31Q400 -31 420 -35Q441 -39 464 -45ZM495 -55Q593 -97 593 -227Q593 -270 571 -306Q549 -341 512 -362Q475 -383 429 -383Z" fill="#000"/><g transform="translate(616.2 591.7)" fill="#000"><path d="M-1.75 -5.9V7.2M1.55 -7.2V5.9" stroke="#000" stroke-width="0.8"/><path d="M-3.1 -1.1L3.0 -3.3V-1.2L-3.1 1.0ZM-3.1 4.3L3.0 2.1V4.2L-3.1 6.4Z" transform="translate(0 -2.6)"/></g><g transform="translate(623.3 599.83)" fill="#000"><path d="M-1.75 -5.9V7.2M1.55 -7.2V5.9" stroke="#000" stroke-width="0.8"/><path d="M-3.1 -1.1L3.0 -3.3V-1.2L-3.1 1.0ZM-3.1 4.3L3.0 2.1V4.2L-3.1 6.4Z" transform="translate(0 -2.6)"/></g><g transform="translate(616.2 647)" fill="#000"><path d="M-1.75 -5.9V7.2M1.55 -7.2V5.9" stroke="#000" stroke-width="0.8"/><path d="M-3.1 -1.1L3.0 -3.3V-1.2L-3.1 1.0ZM-3.1 4.3L3.0 2.1V4.2L-3.1 6.4Z" transform="translate(0 -2.6)"/></g><g transform="translate(623.3 655.13)" fill="#000"><path d="M-1.75 -5.9V7.2M1.55 -7.2V5.9" stroke="#000" stroke-width="0.8"/><path d="M-3.1 -1.1L3.0 -3.3V-1.2L-3.1 1.0ZM-3.1 4.3L3.0 2.1V4.2L-3.1 6.4Z" transform="translate(0 -2.6)"/></g><path d="M631.3 586.28H641.7" stroke="#000" stroke-width="0.5"/><path d="M631.3 580.86H641.7" stroke="#000" stroke-width="0.5"/><ellipse cx="636.5" cy="580.86" rx="3.8" ry="2.5" fill="#000" transform="rotate(-24 636.5 580.86)"/><path d="M633.15 581.66V621" stroke="#000" stroke-width="0.56" fill="none"/><path d="M651.75 586.28H662.15" stroke="#000" stroke-width="0.5"/><path d="M651.75 580.86H662.15" stroke="#000" stroke-width="0.5"/><ellipse cx="656.95" cy="578.15" rx="3.8" ry="2.5" fill="#000" transform="rotate(-24 656.95 578.15)"/><path d="M653.6 578.95V622.66" stroke="#000" stroke-width="0.56" fill="none"/><ellipse cx="677.4" cy="599.83" rx="3.8" ry="2.5" fill="#000" transform="rotate(-24 677.4 599.83)"/><path d="M674.05 600.63V624.32" stroke="#000" stroke-width="0.56" fill="none"/><path d="M692.65 586.28H703.05" stroke="#000" stroke-width="0.5"/><ellipse cx="697.85" cy="586.28" rx="3.8" ry="2.5" fill="#000" transform="rotate(-24 697.85 586.28)"/><path d="M694.5 587.08V625.98" stroke="#000" stroke-width="0.56" fill="none"/><ellipse cx="718.3" cy="605.25" rx="3.8" ry="2.5" fill="#000" transform="rotate(-24 718.3 605.25)"/><path d="M714.95 606.05V627.64" stroke="#000" stroke-width="0.56" fill="none"/><ellipse cx="738.75" cy="591.7" rx="3.8" ry="2.5" fill="#000" transform="rotate(-24 738.75 591.7)"/><path d="M735.4 592.5V629.3" stroke="#000" stroke-width="0.56" fill="none"/><path d="M632.8 618.65L735.75 626.95L735.75 629.65L632.8 621.35Z" fill="#000"/><path d="M631.3 674.1H641.7" stroke="#000" stroke-width="0.5"/><path d="M631.3 679.52H641.7" stroke="#000" stroke-width="0.5"/><path d="M631.3 684.94H641.7" stroke="#000" stroke-width="0.5"/><ellipse cx="636.5" cy="684.94" rx="3.8" ry="2.5" fill="#000" transform="rotate(-24 636.5 684.94)"/><path d="M639.75 684.14V657.84" stroke="#000" stroke-width="0.56" fill="none"/><path d="M672.2 674.1H682.6" stroke="#000" stroke-width="0.5"/><path d="M672.2 679.52H682.6" stroke="#000" stroke-width="0.5"/><ellipse cx="677.4" cy="679.52" rx="3.8" ry="2.5" fill="#000" transform="rotate(-24 677.4 679.52)"/><path d="M680.65 678.72V657.84" stroke="#000" stroke-width="0.56" fill="none"/><path d="M713.1 674.1H723.5" stroke="#000" stroke-width="0.5"/><ellipse cx="718.3" cy="674.1" rx="3.8" ry="2.5" fill="#000" transform="rotate(-24 718.3 674.1)"/><path d="M721.55 673.3V655.13" stroke="#000" stroke-width="0.56" fill="none"/><ellipse cx="767" cy="594.41" rx="3.8" ry="2.5" fill="#000" transform="rotate(-24 767 594.41)"/><path d="M763.65 595.21V613.38" stroke="#000" stroke-width="0.56" fill="none"/><ellipse cx="796" cy="597.12" rx="3.8" ry="2.5" fill="#000" transform="rotate(-24 796 597.12)"/><path d="M792.65 597.92V624" stroke="#000" stroke-width="0.56" fill="none"/><ellipse cx="816.5" cy="605.25" rx="3.8" ry="2.5" fill="#000" transform="rotate(-24 816.5 605.25)"/><path d="M813.15 606.05V626.8" stroke="#000" stroke-width="0.56" fill="none"/><path d="M792.3 621.65L813.5 624.45L813.5 627.15L792.3 624.35Z" fill="#000"/><ellipse cx="837" cy="599.83" rx="3.8" ry="2.5" fill="#000" transform="rotate(-24 837 599.83)"/><path d="M833.65 600.63V618.8" stroke="#000" stroke-width="0.56" fill="none"/><path d="M761.8 674.1H772.2" stroke="#000" stroke-width="0.5"/><path d="M761.8 679.52H772.2" stroke="#000" stroke-width="0.5"/><path d="M761.8 684.94H772.2" stroke="#000" stroke-width="0.5"/><ellipse cx="767" cy="684.94" rx="3.8" ry="2.5" fill="#000" transform="rotate(-24 767 684.94)"/><path d="M770.25 684.14V657.84" stroke="#000" stroke-width="0.56" fill="none"/><path d="M790.8 674.1H801.2" stroke="#000" stroke-width="0.5"/><ellipse cx="796" cy="674.1" rx="3.8" ry="2.5" fill="#000" transform="rotate(-24 796 674.1)"/><path d="M799.25 673.3V655.13" stroke="#000" stroke-width="0.56" fill="none"/><ellipse cx="837" cy="660.55" rx="3.8" ry="2.5" fill="#000" transform="rotate(-24 837 660.55)"/><path d="M840.25 659.75V641.58" stroke="#000" stroke-width="0.56" fill="none"/><ellipse cx="874" cy="599.83" rx="3.8" ry="2.5" fill="#000" transform="rotate(-24 874 599.83)"/><path d="M870.65 600.63V618.8" stroke="#000" stroke-width="0.56" fill="none"/><ellipse cx="902.8" cy="597.12" rx="3.8" ry="2.5" fill="#000" transform="rotate(-24 902.8 597.12)"/><path d="M899.45 597.92V616.09" stroke="#000" stroke-width="0.56" fill="none"/><ellipse cx="932" cy="597.12" rx="3.8" ry="2.5" fill="#000" transform="rotate(-24 932 597.12)"/><path d="M928.65 597.92V624" stroke="#000" stroke-width="0.56" fill="none"/><ellipse cx="952.5" cy="605.25" rx="3.8" ry="2.5" fill="#000" transform="rotate(-24 952.5 605.25)"/><path d="M949.15 606.05V626.8" stroke="#000" stroke-width="0.56" fill="none"/><path d="M928.3 621.65L949.5 624.45L949.5 627.15L928.3 624.35Z" fill="#000"/><path d="M868.8 674.1H879.2" stroke="#000" stroke-width="0.5"/><ellipse cx="874" cy="676.81" rx="3.8" ry="2.5" fill="#000" transform="rotate(-24 874 676.81)"/><path d="M877.25 676.01V657.84" stroke="#000" stroke-width="0.56" fill="none"/><ellipse cx="902.8" cy="671.39" rx="3.8" ry="2.5" fill="#000" transform="rotate(-24 902.8 671.39)"/><path d="M906.05 670.59V652.42" stroke="#000" stroke-width="0.56" fill="none"/><ellipse cx="932" cy="665.97" rx="3.8" ry="2.5" fill="#000" transform="rotate(-24 932 665.97)"/><path d="M935.25 665.17V647" stroke="#000" stroke-width="0.56" fill="none"/><path d="M905.3 592.7C910 588.0 925 588.0 929.6 592.7C925 589.0 910 589.0 905.3 592.7Z" fill="#000" stroke="#000" stroke-width="0.15"/><path d="M934.6 669.0C944 677.0 968 677.0 977.6 669.0C968 675.8 944 675.8 934.6 669.0Z" fill="#000" stroke="#000" stroke-width="0.15"/><ellipse cx="980.5" cy="599.83" rx="3.8" ry="2.5" fill="#000" transform="rotate(-24 980.5 599.83)"/><path d="M977.15 600.63V618.8" stroke="#000" stroke-width="0.56" fill="none"/><path transform="translate(1016.69 600.05) scale(0.02525 0.02185)" d="M159 1Q111 1 80 -22Q50 -44 50 -90Q50 -141 78 -182Q107 -222 153 -246Q199 -269 251 -269Q295 -269 321 -246Q347 -222 347 -179Q347 -130 321 -89Q295 -48 252 -24Q210 1 159 1ZM77 -66Q77 -56 84 -48Q92 -40 105 -40Q140 -40 192 -69Q227 -89 256 -114Q284 -138 301 -162Q318 -187 318 -204Q318 -215 312 -222Q307 -230 293 -230Q274 -230 247 -218Q220 -206 190 -187Q161 -168 135 -146Q109 -123 93 -102Q77 -81 77 -66Z" fill="#000"/><path d="M1018.35 597.92V616.09" stroke="#000" stroke-width="0.56" fill="none"/><ellipse cx="980.5" cy="665.97" rx="3.8" ry="2.5" fill="#000" transform="rotate(-24 980.5 665.97)"/><path d="M983.75 665.17V639.5" stroke="#000" stroke-width="0.56" fill="none"/><ellipse cx="1001.07" cy="660.55" rx="3.8" ry="2.5" fill="#000" transform="rotate(-24 1001.07 660.55)"/><path d="M1004.32 659.75V640.27" stroke="#000" stroke-width="0.56" fill="none"/><ellipse cx="1021.64" cy="665.97" rx="3.8" ry="2.5" fill="#000" transform="rotate(-24 1021.64 665.97)"/><path d="M1024.89 665.17V641.03" stroke="#000" stroke-width="0.56" fill="none"/><ellipse cx="1042.21" cy="668.68" rx="3.8" ry="2.5" fill="#000" transform="rotate(-24 1042.21 668.68)"/><path d="M1045.46 667.88V641.8" stroke="#000" stroke-width="0.56" fill="none"/><path d="M983.4 639.15L1045.8 641.45L1045.8 644.15L983.4 641.85Z" fill="#000"/><path d="M1057.3 674.1H1067.7" stroke="#000" stroke-width="0.5"/><ellipse cx="1062.5" cy="676.81" rx="3.8" ry="2.5" fill="#000" transform="rotate(-24 1062.5 676.81)"/><path d="M1065.75 676.01V657.84" stroke="#000" stroke-width="0.56" fill="none"/><circle cx="1089.2" cy="599.83" r="1.05" fill="#000"/><circle cx="1089.2" cy="605.25" r="1.05" fill="#000"/><circle cx="1089.2" cy="655.13" r="1.05" fill="#000"/><circle cx="1089.2" cy="660.55" r="1.05" fill="#000"/><path d="M1093.3 591.7V668.68" stroke="#000" stroke-width="0.5" fill="none"/><rect x="1095" y="591.35" width="3" height="77.68" fill="#000"/><ellipse cx="650.3" cy="217.6" rx="2.5" ry="1.7" fill="#000" transform="rotate(-24 650.3 217.6)"/><path d="M652.4 217V207.6" stroke="#000" stroke-width="0.7"/><text x="656" y="219.9" font-family="Liberation Serif, serif" font-weight="bold" font-size="14.1" fill="#000">= 175</text><text x="840.3" y="173.9" text-anchor="middle" font-family="Liberation Serif, serif" font-size="18.9" fill="#000">Demo Song</text><text x="1098" y="195.6" text-anchor="end" font-family="Liberation Serif, serif" font-style="italic" font-size="13.3" fill="#000">Kashiwade</text></svg><div class="a" style="left:0;top:838px;width:1152px;height:1px;background:#2b2b2b"></div><div class="a" style="left:0;top:839px;width:1152px;height:25px;background:#181818"></div><div class="a" style="left:0;top:839px;width:41px;height:25px;background:#0078d4"></div><svg style="left:14px;top:842px" width="14" height="15"><path d="M1.500 4.500L6 9L1.500 13.500M12 1L7.500 5L12 9" stroke="#fff" stroke-width="1.300" fill="none"/></svg><svg style="left:51px;top:842px" width="130" height="18" fill="none" stroke="#ccc" stroke-width="1.250"><circle cx="7.800" cy="8" r="7"/><path d="M4.900 5.100L10.700 10.900M10.700 5.100L4.900 10.900"/><path d="M40.500 1.300L47.800 14.300H33.200Z" stroke-linejoin="round"/><path d="M40.500 5.500V10.300M40.500 11.600V13"/><circle cx="72.300" cy="8" r="7"/><path d="M72.300 7.300V11.800M72.300 4.200V5.800"/><path d="M115.500 2L126.500 8.500L120 12.300"/><path d="M115.500 2V6"/><ellipse cx="115.700" cy="11.800" rx="2.400" ry="3.100" /><path d="M111.500 9.500L113.500 10.500M120 9.500L118 10.500M111.300 13H113.300M120.200 13H118.200M112 16.300L113.700 14.700M119.500 16.300L117.800 14.700" stroke-width="1"/></svg><div class="t" style="left:71.7px;top:841.500px;font-size:13.600px;color:#ccc">0</div><div class="t" style="left:104.3px;top:841.500px;font-size:13.600px;color:#ccc">0</div><div class="t" style="left:135.8px;top:841.500px;font-size:13.600px;color:#ccc">9</div><svg style="left:1081px;top:841.500px" width="19" height="17" viewBox="-0.5 0 21 19"><path d="M2.500 8.200C.9 9.200 .2 10.600 .2 12.200C.2 15.300 4.800 17.800 10 17.800C15.200 17.800 19.800 15.300 19.800 12.200C19.800 10.600 19.100 9.200 17.500 8.200Z" fill="#d4d4d4"/><path d="M4.300 9.800H15.700V14.300C14 15.500 12 15.900 10 15.900C8 15.900 6 15.500 4.300 14.300Z" fill="#181818"/><rect x="6.800" y="11" width="1.900" height="3.500" rx=".9" fill="#e4e4e4"/><rect x="11.400" y="11" width="1.900" height="3.500" rx=".9" fill="#e4e4e4"/><rect x="2.700" y="1.800" width="6.800" height="6.600" rx="2.700" fill="#181818" stroke="#d8d8d8" stroke-width="1.700"/><rect x="10.500" y="1.800" width="6.800" height="6.600" rx="2.700" fill="#181818" stroke="#d8d8d8" stroke-width="1.700"/></svg><svg style="left:1118px;top:841px" width="18" height="17" fill="none" stroke="#d0d0d0" stroke-width="1.400"><path d="M9 1.800C5.200 1.800 3.800 4.600 3.800 7.500V11L2.200 13.600H14.300L13 11V8.500" stroke-linejoin="round"/><path d="M6.200 14.200C6.700 16 9.300 16 9.800 14.200Z" fill="#d0d0d0" stroke="none"/><circle cx="12.400" cy="4.300" r="3.100" fill="#d0d0d0" stroke="none"/></svg><svg style="left:0;top:0" width="1152" height="864"><path fill-rule="evenodd" fill="#383838" d="M0 0H1152V864H0ZM8 .5H1144A7.500 7.500 0 0 1 1151.500 8V855.500A7.500 7.500 0 0 1 1144 863H8A7.500 7.500 0 0 1 .5 855.500V8A7.500 7.500 0 0 1 8 .5Z"/><rect x=".5" y=".5" width="1151" height="863" rx="7.500" fill="none" stroke="#4a4a4a" stroke-width="1"/></svg></body></html>
